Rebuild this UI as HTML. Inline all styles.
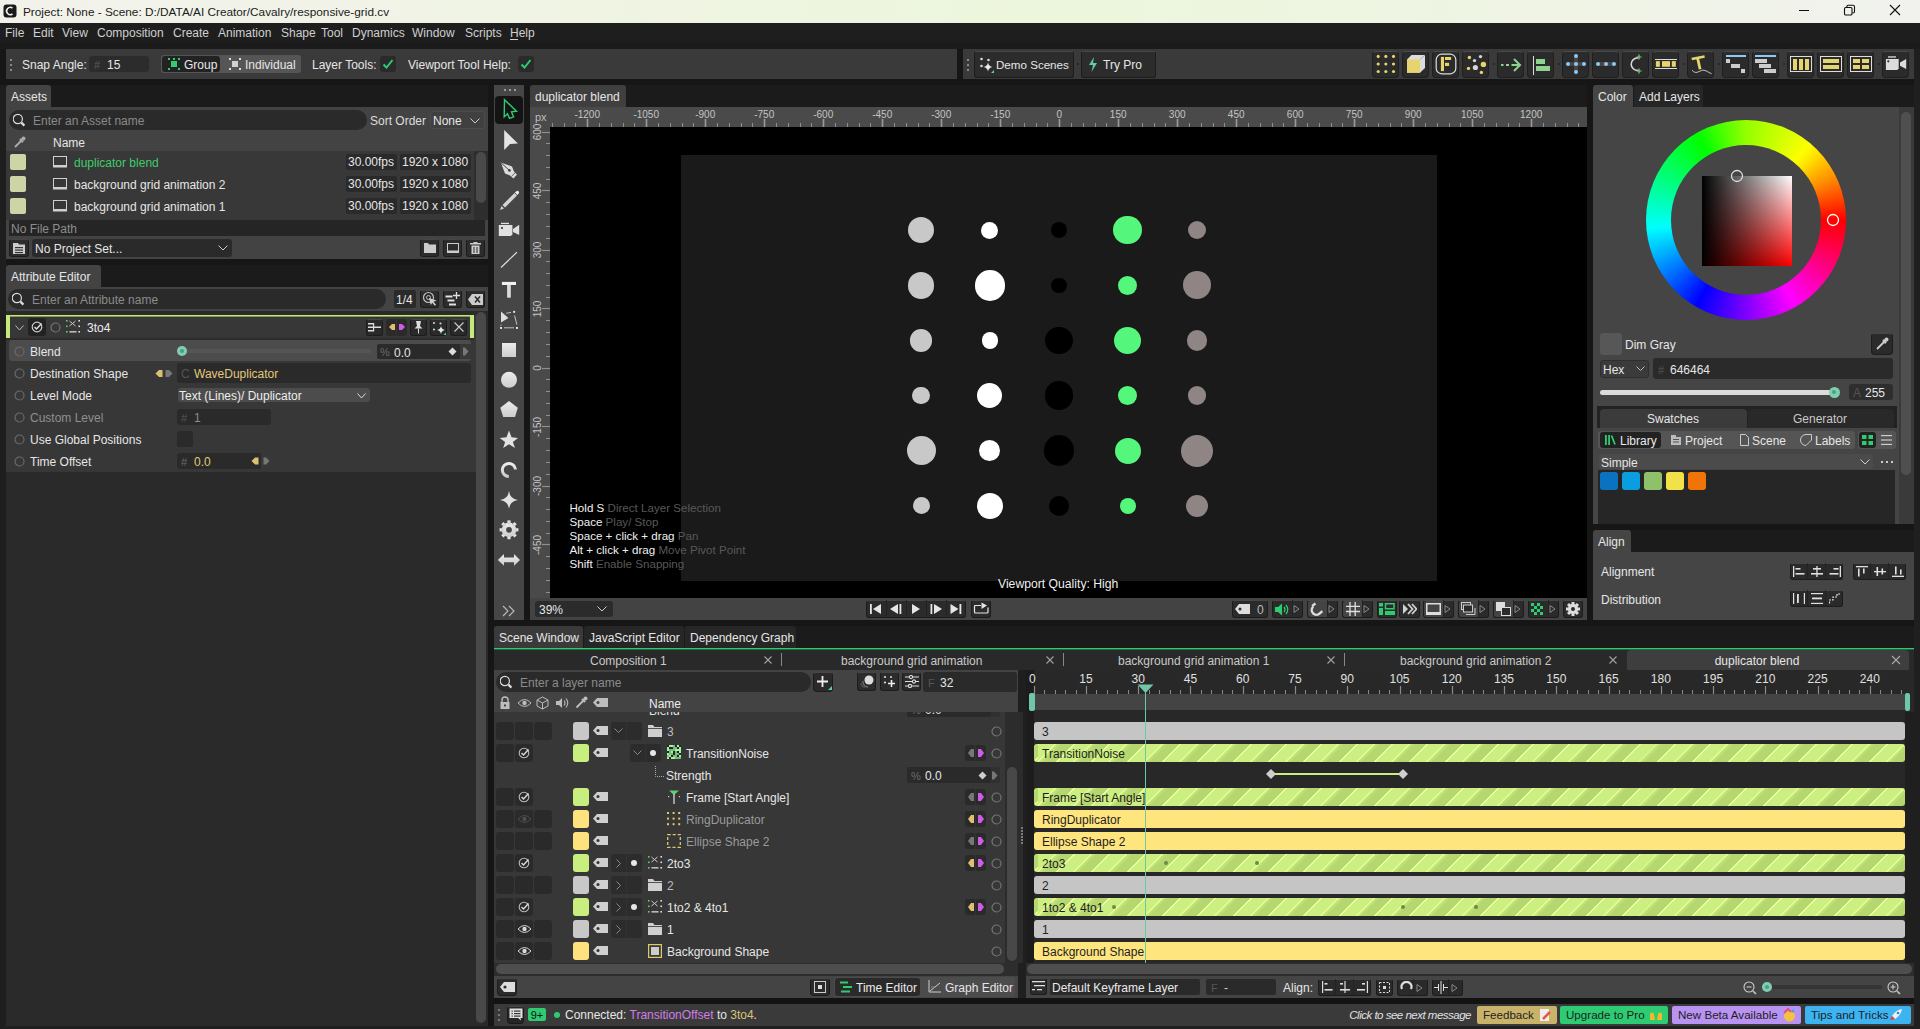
<!DOCTYPE html><html><head><meta charset="utf-8"><style>
html,body{margin:0;padding:0;width:1920px;height:1029px;overflow:hidden;background:#161616;font-family:"Liberation Sans",sans-serif;}
body>div,body>svg{position:absolute;box-sizing:border-box;}
.t{white-space:nowrap;}
</style></head><body>
<div style="left:0px;top:0px;width:1920px;height:23px;background:linear-gradient(to right,#f2f2eb 0%,#f1f3e8 15%,#eef5e0 40%,#ecf6dc 55%,#eff4e4 80%,#f1f2ee 100%);"></div>
<svg style="left:3px;top:4px;" width="14" height="14" viewBox="0 0 14 14"><rect x="0.5" y="0.5" width="13" height="13" rx="3" fill="#1a1a1a"/><path d="M9.5 4.2 A3.6 3.6 0 1 0 9.5 9.8" stroke="#eee" stroke-width="1.6" fill="none"/></svg>
<div class="t" style="left:23px;top:3.5px;height:16px;line-height:16px;font-size:11.8px;color:#1b1b1b;">Project: None - Scene: D:/DATA/AI Creator/Cavalry/responsive-grid.cv</div>
<svg style="left:1843px;top:4px;" width="13" height="13" viewBox="0 0 13 13"><rect x="1.5" y="3.5" width="7.5" height="7.5" rx="1.3" fill="none" stroke="#111" stroke-width="1.1"/><path d="M3.8 3.2 V2.6 Q3.8 1.2 5.2 1.2 H10 Q11.5 1.2 11.5 2.7 V7.6 Q11.5 9 10.1 9 H9.4" fill="none" stroke="#111" stroke-width="1.1"/></svg>
<svg style="left:1889px;top:4px;" width="12" height="12" viewBox="0 0 12 12"><path d="M1 1 L11 11 M11 1 L1 11" stroke="#111" stroke-width="1.1"/></svg>
<div style="left:1799px;top:10px;width:10px;height:1px;background:#111;"></div>
<div style="left:0px;top:23px;width:1920px;height:26px;background:#1e1e1e;"></div>
<div style="left:0px;top:42px;width:1920px;height:7px;background:#1b1b1b;"></div>
<div class="t" style="left:5px;top:24.5px;height:16px;line-height:16px;font-size:12px;color:#cfcfcf;">File</div>
<div class="t" style="left:33px;top:24.5px;height:16px;line-height:16px;font-size:12px;color:#cfcfcf;">Edit</div>
<div class="t" style="left:62px;top:24.5px;height:16px;line-height:16px;font-size:12px;color:#cfcfcf;">View</div>
<div class="t" style="left:97px;top:24.5px;height:16px;line-height:16px;font-size:12px;color:#cfcfcf;">Composition</div>
<div class="t" style="left:173px;top:24.5px;height:16px;line-height:16px;font-size:12px;color:#cfcfcf;">Create</div>
<div class="t" style="left:218px;top:24.5px;height:16px;line-height:16px;font-size:12px;color:#cfcfcf;">Animation</div>
<div class="t" style="left:281px;top:24.5px;height:16px;line-height:16px;font-size:12px;color:#cfcfcf;">Shape</div>
<div class="t" style="left:321px;top:24.5px;height:16px;line-height:16px;font-size:12px;color:#cfcfcf;">Tool</div>
<div class="t" style="left:352px;top:24.5px;height:16px;line-height:16px;font-size:12px;color:#cfcfcf;">Dynamics</div>
<div class="t" style="left:412px;top:24.5px;height:16px;line-height:16px;font-size:12px;color:#cfcfcf;">Window</div>
<div class="t" style="left:465px;top:24.5px;height:16px;line-height:16px;font-size:12px;color:#cfcfcf;">Scripts</div>
<div class="t" style="left:510px;top:24.5px;height:16px;line-height:16px;font-size:12px;color:#cfcfcf;">Help</div>
<div style="left:510px;top:39px;width:8px;height:1px;background:#cfcfcf;"></div>
<div style="left:0px;top:49px;width:1920px;height:36px;background:#161616;"></div>
<div style="left:6px;top:49px;width:951px;height:30px;background:#3a3a3a;"></div>
<div style="left:10px;top:59px;width:2px;height:2px;background:#8a8a8a;"></div>
<div style="left:10px;top:64px;width:2px;height:2px;background:#8a8a8a;"></div>
<div style="left:10px;top:69px;width:2px;height:2px;background:#8a8a8a;"></div>
<div class="t" style="left:22px;top:57.0px;height:16px;line-height:16px;font-size:12px;color:#e6e6e6;">Snap Angle:</div>
<div style="left:89px;top:56px;width:60px;height:16px;background:#2c2c2c;border-radius:3px;"></div>
<div class="t" style="left:94px;top:57.5px;height:15px;line-height:15px;font-size:11px;color:#5b5b5b;">#</div>
<div class="t" style="left:107px;top:57.0px;height:16px;line-height:16px;font-size:12px;color:#e6e6e6;">15</div>
<div style="left:161px;top:55px;width:140px;height:18px;background:#555555;border-radius:3px;"></div>
<div style="left:162px;top:56px;width:58px;height:16px;background:#222222;border-radius:3px;"></div>
<svg style="left:168px;top:58px;" width="12" height="12" viewBox="0 0 12 12"><rect x="3" y="3" width="6" height="6" fill="#2ecc71"/><rect x="0" y="0" width="2" height="2" fill="#2ecc71"/><rect x="10" y="0" width="2" height="2" fill="#2ecc71"/><rect x="0" y="10" width="2" height="2" fill="#2ecc71"/><rect x="10" y="10" width="2" height="2" fill="#2ecc71"/><rect x="5" y="0" width="2" height="2" fill="#2ecc71"/></svg>
<div class="t" style="left:184px;top:57.0px;height:16px;line-height:16px;font-size:12px;color:#eaeaea;">Group</div>
<svg style="left:229px;top:58px;" width="12" height="12" viewBox="0 0 12 12"><rect x="3" y="3" width="6" height="6" fill="#cfcfcf"/><rect x="0" y="0" width="2" height="2" fill="#ddd"/><rect x="10" y="0" width="2" height="2" fill="#ddd"/><rect x="0" y="10" width="2" height="2" fill="#ddd"/><rect x="10" y="10" width="2" height="2" fill="#ddd"/></svg>
<div class="t" style="left:245px;top:57.0px;height:16px;line-height:16px;font-size:12px;color:#e6e6e6;">Individual</div>
<div class="t" style="left:312px;top:57.0px;height:16px;line-height:16px;font-size:12px;color:#e6e6e6;">Layer Tools:</div>
<div style="left:380px;top:56px;width:16px;height:16px;background:#2a2a2a;border-radius:3px;"></div>
<svg style="left:382px;top:58px;" width="12" height="12" viewBox="0 0 12 12"><path d="M1.5 6.5 L4.5 9.5 L10.5 2" stroke="#2ecc71" stroke-width="2" fill="none"/></svg>
<div class="t" style="left:408px;top:57.0px;height:16px;line-height:16px;font-size:12px;color:#e6e6e6;">Viewport Tool Help:</div>
<div style="left:518px;top:56px;width:16px;height:16px;background:#2a2a2a;border-radius:3px;"></div>
<svg style="left:520px;top:58px;" width="12" height="12" viewBox="0 0 12 12"><path d="M1.5 6.5 L4.5 9.5 L10.5 2" stroke="#2ecc71" stroke-width="2" fill="none"/></svg>
<div style="left:963px;top:49px;width:951px;height:30px;background:#3a3a3a;"></div>
<div style="left:967px;top:59px;width:2px;height:2px;background:#8a8a8a;"></div>
<div style="left:967px;top:64px;width:2px;height:2px;background:#8a8a8a;"></div>
<div style="left:967px;top:69px;width:2px;height:2px;background:#8a8a8a;"></div>
<div style="left:974px;top:51px;width:100px;height:27px;background:#2c2c2c;border-radius:3px;border:1px solid #1c1c1c;border-top-color:#474747;"></div>
<svg style="left:978px;top:56px;" width="18" height="18" viewBox="0 0 18 18"><circle cx="3.5" cy="3" r="1.3" fill="#d8d8d8"/><circle cx="10.5" cy="4" r="1.3" fill="#d8d8d8"/><circle cx="3.5" cy="10" r="1.3" fill="#d8d8d8"/><path d="M10 6.5 Q10.6 10.4 14.5 11 Q10.6 11.6 10 15.5 Q9.4 11.6 5.5 11 Q9.4 10.4 10 6.5 Z" fill="#eeeeee"/><path d="M16 14 V17 H13 Z" fill="#5fcfa0"/></svg>
<div class="t" style="left:996px;top:57.0px;height:16px;line-height:16px;font-size:11.6px;color:#e6e6e6;">Demo Scenes</div>
<div style="left:1077px;top:63px;width:2px;height:2px;background:#222;"></div>
<div style="left:1081px;top:51px;width:75px;height:27px;background:#2c2c2c;border-radius:3px;border:1px solid #1c1c1c;border-top-color:#474747;"></div>
<svg style="left:1088px;top:57px;" width="10" height="15" viewBox="0 0 10 15"><path d="M6 0 L1 8 H5 L3.5 15 L9 6 H5 Z" fill="#5fcf9f"/></svg>
<div class="t" style="left:1103px;top:57.0px;height:16px;line-height:16px;font-size:12px;color:#e6e6e6;">Try Pro</div>
<div style="left:1372px;top:51px;width:27px;height:27px;background:#2b2b2b;border-radius:4px;border:1px solid #1f1f1f;border-top:1px solid #4a4a4a;"></div>
<div style="left:1402px;top:51px;width:27px;height:27px;background:#2b2b2b;border-radius:4px;border:1px solid #1f1f1f;border-top:1px solid #4a4a4a;"></div>
<div style="left:1432px;top:51px;width:27px;height:27px;background:#2b2b2b;border-radius:4px;border:1px solid #1f1f1f;border-top:1px solid #4a4a4a;"></div>
<div style="left:1462px;top:51px;width:27px;height:27px;background:#2b2b2b;border-radius:4px;border:1px solid #1f1f1f;border-top:1px solid #4a4a4a;"></div>
<div style="left:1497px;top:51px;width:27px;height:27px;background:#2b2b2b;border-radius:4px;border:1px solid #1f1f1f;border-top:1px solid #4a4a4a;"></div>
<div style="left:1527px;top:51px;width:27px;height:27px;background:#2b2b2b;border-radius:4px;border:1px solid #1f1f1f;border-top:1px solid #4a4a4a;"></div>
<div style="left:1562px;top:51px;width:27px;height:27px;background:#2b2b2b;border-radius:4px;border:1px solid #1f1f1f;border-top:1px solid #4a4a4a;"></div>
<div style="left:1592px;top:51px;width:27px;height:27px;background:#2b2b2b;border-radius:4px;border:1px solid #1f1f1f;border-top:1px solid #4a4a4a;"></div>
<div style="left:1622px;top:51px;width:27px;height:27px;background:#2b2b2b;border-radius:4px;border:1px solid #1f1f1f;border-top:1px solid #4a4a4a;"></div>
<div style="left:1652px;top:51px;width:27px;height:27px;background:#2b2b2b;border-radius:4px;border:1px solid #1f1f1f;border-top:1px solid #4a4a4a;"></div>
<div style="left:1687px;top:51px;width:27px;height:27px;background:#2b2b2b;border-radius:4px;border:1px solid #1f1f1f;border-top:1px solid #4a4a4a;"></div>
<div style="left:1722px;top:51px;width:27px;height:27px;background:#2b2b2b;border-radius:4px;border:1px solid #1f1f1f;border-top:1px solid #4a4a4a;"></div>
<div style="left:1752px;top:51px;width:27px;height:27px;background:#2b2b2b;border-radius:4px;border:1px solid #1f1f1f;border-top:1px solid #4a4a4a;"></div>
<div style="left:1787px;top:51px;width:27px;height:27px;background:#2b2b2b;border-radius:4px;border:1px solid #1f1f1f;border-top:1px solid #4a4a4a;"></div>
<div style="left:1817px;top:51px;width:27px;height:27px;background:#2b2b2b;border-radius:4px;border:1px solid #1f1f1f;border-top:1px solid #4a4a4a;"></div>
<div style="left:1847px;top:51px;width:27px;height:27px;background:#2b2b2b;border-radius:4px;border:1px solid #1f1f1f;border-top:1px solid #4a4a4a;"></div>
<div style="left:1882px;top:51px;width:27px;height:27px;background:#2b2b2b;border-radius:4px;border:1px solid #1f1f1f;border-top:1px solid #4a4a4a;"></div>
<div style="left:1493px;top:63px;width:2px;height:2px;background:#2a2a2a;"></div>
<div style="left:1558px;top:63px;width:2px;height:2px;background:#2a2a2a;"></div>
<div style="left:1683px;top:63px;width:2px;height:2px;background:#2a2a2a;"></div>
<div style="left:1718px;top:63px;width:2px;height:2px;background:#2a2a2a;"></div>
<div style="left:1783px;top:63px;width:2px;height:2px;background:#2a2a2a;"></div>
<div style="left:1878px;top:63px;width:2px;height:2px;background:#2a2a2a;"></div>
<svg style="left:1376px;top:54px;" width="21" height="21" viewBox="0 0 21 21"><circle cx="2.2" cy="2.4" r="1.55" fill="#e6d46e"/><circle cx="2.2" cy="9.95" r="1.55" fill="#e6d46e"/><circle cx="2.2" cy="17.5" r="1.55" fill="#e6d46e"/><circle cx="9.850000000000001" cy="2.4" r="1.55" fill="#e6d46e"/><circle cx="9.850000000000001" cy="9.95" r="1.55" fill="#e6d46e"/><circle cx="9.850000000000001" cy="17.5" r="1.55" fill="#e6d46e"/><circle cx="17.5" cy="2.4" r="1.55" fill="#e6d46e"/><circle cx="17.5" cy="9.95" r="1.55" fill="#e6d46e"/><circle cx="17.5" cy="17.5" r="1.55" fill="#e6d46e"/></svg>
<svg style="left:1406px;top:54px;" width="21" height="20" viewBox="0 0 21 20"><path d="M1 5.5 L5.5 1 H19 V14 L14 18.7 H1 Z" fill="#dcdcdc"/><rect x="1" y="5.5" width="13" height="13.2" fill="#e6d46e"/><path d="M14 5.5 L19 1" stroke="#9a9a9a" stroke-width="0.8"/></svg>
<svg style="left:1435px;top:53px;" width="22" height="22" viewBox="0 0 22 22"><rect x="1.2" y="1.2" width="19.6" height="19.6" rx="5.5" fill="none" stroke="#dcdcdc" stroke-width="1.2"/><rect x="5.9" y="3.9" width="3.1" height="14.2" fill="#e6d46e"/><rect x="10" y="4" width="6.1" height="3" fill="#e6d46e"/><rect x="10" y="9.8" width="4.1" height="3.2" fill="#e6d46e"/></svg>
<svg style="left:1463px;top:53px;" width="24" height="22" viewBox="0 0 24 22"><circle cx="6.4" cy="4.5" r="1.7" fill="#e6d46e"/><circle cx="17.5" cy="3.6" r="1.7" fill="#d6d6d6"/><circle cx="11.5" cy="7.6" r="1.7" fill="#d6d6d6"/><circle cx="20.4" cy="11.4" r="2.7" fill="#e6d46e"/><circle cx="5.5" cy="15.4" r="1.7" fill="#e6d46e"/><circle cx="12.4" cy="14.5" r="2.6" fill="#d6d6d6"/><circle cx="18.4" cy="19.4" r="1.7" fill="#e6d46e"/></svg>
<svg style="left:1500px;top:57px;" width="22" height="16" viewBox="0 0 22 16"><path d="M1 8 H3.5 M6 8 H9 M11.5 8 H19" stroke="#8fd28f" stroke-width="2"/><path d="M14 2 L20 8 L14 14" stroke="#8fd28f" stroke-width="2" fill="none"/></svg>
<svg style="left:1531px;top:56px;" width="20" height="19" viewBox="0 0 20 19"><rect x="2" y="0" width="1" height="19" fill="#ddd"/><rect x="5" y="3" width="9" height="5" fill="#8fd28f"/><rect x="5" y="10" width="14" height="5" fill="#8fd28f"/></svg>
<svg style="left:1562px;top:50px;" width="28" height="28" viewBox="0 0 28 28"><rect x="12" y="6" width="4" height="16" fill="#464646"/><rect x="6" y="12" width="16" height="4" fill="#464646"/><circle cx="14" cy="6" r="2" fill="#8ec8f4"/><circle cx="14" cy="14" r="2" fill="#8ec8f4"/><circle cx="14" cy="22" r="2" fill="#8ec8f4"/><circle cx="6" cy="14" r="2" fill="#8ec8f4"/><circle cx="22" cy="14" r="2" fill="#8ec8f4"/></svg>
<svg style="left:1592px;top:50px;" width="28" height="28" viewBox="0 0 28 28"><rect x="6" y="12" width="16" height="4" fill="#464646"/><circle cx="6" cy="14" r="2" fill="#8ec8f4"/><circle cx="14" cy="14" r="2" fill="#8ec8f4"/><circle cx="22" cy="14" r="2" fill="#8ec8f4"/></svg>
<svg style="left:1622px;top:50px;" width="28" height="28" viewBox="0 0 28 28"><path d="M16.2 7.7 A7 6.45 0 0 0 16.2 20.6" stroke="#dcdcdc" stroke-width="1.5" fill="none"/><path d="M17 4.5 V9.5 M14.5 7 H19.5 M17 18.5 V23.5 M14.5 21 H19.5" stroke="#7fcf8f" stroke-width="1.2"/></svg>
<svg style="left:1652px;top:50px;" width="28" height="28" viewBox="0 0 28 28"><rect x="3" y="9" width="22" height="1" fill="#ddd"/><rect x="3" y="18" width="22" height="1" fill="#ddd"/><rect x="3.9" y="11.1" width="4" height="5.7" fill="#e6d46e"/><rect x="10" y="11.1" width="8" height="5.7" fill="#e6d46e"/><rect x="19.8" y="11.1" width="4" height="5.7" fill="#e6d46e"/></svg>
<svg style="left:1687px;top:50px;" width="28" height="28" viewBox="0 0 28 28"><path d="M4.7 9 L17.6 6.4" stroke="#e6d46e" stroke-width="2.6"/><path d="M10.5 7.7 L13.1 19.2" stroke="#e6d46e" stroke-width="2.8"/><path d="M5 20.1 Q8 24 12 21.5 T19 20.8 T24.6 23.7" stroke="#cfcfcf" stroke-width="0.9" fill="none"/></svg>
<svg style="left:1726px;top:55px;" width="20" height="20" viewBox="0 0 20 20"><rect x="0" y="0" width="20" height="2" fill="#8ec8f4"/><rect x="0" y="4" width="4" height="4" fill="#ccc"/><rect x="5" y="9" width="9" height="4" fill="#ccc"/><rect x="15" y="14" width="4" height="4" fill="#ccc"/></svg>
<svg style="left:1755px;top:55px;" width="21" height="20" viewBox="0 0 21 20"><rect x="0" y="0" width="21" height="2" fill="#8ec8f4"/><rect x="0" y="4" width="12" height="4" fill="#ccc"/><rect x="4" y="9" width="12" height="4" fill="#ccc"/><rect x="9" y="14" width="12" height="4" fill="#ccc"/></svg>
<svg style="left:1790px;top:56px;" width="22" height="17" viewBox="0 0 22 17"><rect x="0.5" y="0.5" width="21" height="15" fill="none" stroke="#ddd"/><rect x="3" y="3" width="4" height="11" fill="#e6d46e"/><rect x="9" y="3" width="4" height="11" fill="#e6d46e"/><rect x="15" y="3" width="4" height="11" fill="#e6d46e"/></svg>
<svg style="left:1820px;top:56px;" width="22" height="17" viewBox="0 0 22 17"><rect x="0.5" y="0.5" width="21" height="15" fill="none" stroke="#ddd"/><rect x="3" y="3" width="16" height="4" fill="#e6d46e"/><rect x="3" y="9" width="16" height="4" fill="#e6d46e"/></svg>
<svg style="left:1850px;top:56px;" width="22" height="17" viewBox="0 0 22 17"><rect x="0.5" y="0.5" width="21" height="15" fill="none" stroke="#ddd"/><rect x="3" y="3" width="7" height="4" fill="#e6d46e"/><rect x="12" y="3" width="7" height="4" fill="#e6d46e"/><rect x="3" y="9" width="7" height="4" fill="#e6d46e"/><rect x="12" y="9" width="7" height="4" fill="#e6d46e"/></svg>
<svg style="left:1882px;top:50px;" width="28" height="28" viewBox="0 0 28 28"><rect x="6" y="6.3" width="8" height="1.3" fill="#dcdcdc"/><path d="M3.9 8.9 H16.7 V18.4 L15.2 19.9 H3.9 Z" fill="#dcdcdc"/><path d="M18 12.5 L24.2 8.9 V19 L18 15.8 Z" fill="#dcdcdc"/><circle cx="6.3" cy="11.3" r="1.1" fill="#2b2b2b"/></svg>
<div style="left:6px;top:85px;width:482px;height:941px;background:#2a2a2a;"></div>
<div style="left:6px;top:85px;width:482px;height:22px;background:#1b1b1b;"></div>
<div style="left:6px;top:85px;width:45px;height:22px;background:#434343;border-radius:3px 3px 0 0;"></div>
<div class="t" style="left:11px;top:89.0px;height:16px;line-height:16px;font-size:12px;color:#e6e6e6;">Assets</div>
<div style="left:6px;top:107px;width:482px;height:152px;background:#434343;"></div>
<div style="left:9px;top:110px;width:358px;height:20px;background:#2a2a2a;border-radius:10px;"></div>
<svg style="left:13px;top:113px;" width="14" height="14" viewBox="0 0 14 14"><circle cx="4.8" cy="6" r="4.6" stroke="#ddd" stroke-width="1.2" fill="none"/><path d="M8.4 9.6 L11.4 12.6" stroke="#ddd" stroke-width="2.2"/></svg>
<div class="t" style="left:33px;top:113.0px;height:16px;line-height:16px;font-size:12px;color:#8b8b8b;">Enter an Asset name</div>
<div class="t" style="left:370px;top:113.0px;height:16px;line-height:16px;font-size:12px;color:#dcdcdc;">Sort Order</div>
<div style="left:430px;top:111px;width:55px;height:18px;background:#404040;border-radius:3px;border:1px solid #4c4c4c;"></div>
<div class="t" style="left:433px;top:113.0px;height:16px;line-height:16px;font-size:12px;color:#e6e6e6;">None</div>
<svg style="left:470px;top:118px;" width="10" height="6" viewBox="0 0 10 6"><path d="M0.5 0.5 L5.0 5 L9.5 0.5" stroke="#ccc" stroke-width="1" fill="none"/></svg>
<div style="left:6px;top:133px;width:482px;height:18px;background:#434343;"></div>
<svg style="left:13px;top:136px;" width="13" height="13" viewBox="0 0 13 13"><path d="M2 11 L8 5" stroke="#aaa" stroke-width="2"/><path d="M7 3 L10 6" stroke="#aaa" stroke-width="2.5"/><circle cx="10.5" cy="2.5" r="2" fill="#aaa"/></svg>
<div class="t" style="left:53px;top:135.0px;height:16px;line-height:16px;font-size:12px;color:#e6e6e6;">Name</div>
<div style="left:6px;top:151px;width:468px;height:69px;background:#383838;"></div>
<div style="left:10px;top:154px;width:16px;height:16px;background:#cdd4a6;border-radius:2px;"></div>
<svg style="left:53px;top:155px;" width="14" height="13" viewBox="0 0 14 13"><rect x="0.5" y="1.5" width="13" height="9" fill="none" stroke="#cfcfcf" stroke-width="1"/><rect x="0" y="10" width="14" height="2.5" fill="#cfcfcf"/></svg>
<div class="t" style="left:74px;top:155.0px;height:16px;line-height:16px;font-size:12px;color:#3fcb6a;">duplicator blend</div>
<div style="left:346px;top:154px;width:51px;height:16px;background:#2a2a2a;border-radius:2px;"></div>
<div class="t" style="left:348px;top:154.0px;height:16px;line-height:16px;font-size:12px;color:#e6e6e6;">30.00fps</div>
<div style="left:400px;top:154px;width:71px;height:16px;background:#2a2a2a;border-radius:2px;"></div>
<div class="t" style="left:402px;top:154.0px;height:16px;line-height:16px;font-size:12px;color:#e6e6e6;">1920 x 1080</div>
<div style="left:10px;top:176px;width:16px;height:16px;background:#cdd4a6;border-radius:2px;"></div>
<svg style="left:53px;top:177px;" width="14" height="13" viewBox="0 0 14 13"><rect x="0.5" y="1.5" width="13" height="9" fill="none" stroke="#cfcfcf" stroke-width="1"/><rect x="0" y="10" width="14" height="2.5" fill="#cfcfcf"/></svg>
<div class="t" style="left:74px;top:177.0px;height:16px;line-height:16px;font-size:12px;color:#e6e6e6;">background grid animation 2</div>
<div style="left:346px;top:176px;width:51px;height:16px;background:#2a2a2a;border-radius:2px;"></div>
<div class="t" style="left:348px;top:176.0px;height:16px;line-height:16px;font-size:12px;color:#e6e6e6;">30.00fps</div>
<div style="left:400px;top:176px;width:71px;height:16px;background:#2a2a2a;border-radius:2px;"></div>
<div class="t" style="left:402px;top:176.0px;height:16px;line-height:16px;font-size:12px;color:#e6e6e6;">1920 x 1080</div>
<div style="left:10px;top:198px;width:16px;height:16px;background:#cdd4a6;border-radius:2px;"></div>
<svg style="left:53px;top:199px;" width="14" height="13" viewBox="0 0 14 13"><rect x="0.5" y="1.5" width="13" height="9" fill="none" stroke="#cfcfcf" stroke-width="1"/><rect x="0" y="10" width="14" height="2.5" fill="#cfcfcf"/></svg>
<div class="t" style="left:74px;top:199.0px;height:16px;line-height:16px;font-size:12px;color:#e6e6e6;">background grid animation 1</div>
<div style="left:346px;top:198px;width:51px;height:16px;background:#2a2a2a;border-radius:2px;"></div>
<div class="t" style="left:348px;top:198.0px;height:16px;line-height:16px;font-size:12px;color:#e6e6e6;">30.00fps</div>
<div style="left:400px;top:198px;width:71px;height:16px;background:#2a2a2a;border-radius:2px;"></div>
<div class="t" style="left:402px;top:198.0px;height:16px;line-height:16px;font-size:12px;color:#e6e6e6;">1920 x 1080</div>
<div style="left:474px;top:151px;width:14px;height:69px;background:#2e2e2e;"></div>
<div style="left:476px;top:152px;width:10px;height:51px;background:#4a4a4a;border-radius:5px;"></div>
<div style="left:9px;top:220px;width:476px;height:16px;background:#252525;"></div>
<div class="t" style="left:11px;top:221.0px;height:16px;line-height:16px;font-size:12px;color:#8d8d8d;">No File Path</div>
<div style="left:6px;top:236px;width:482px;height:23px;background:#434343;"></div>
<div style="left:9px;top:239px;width:20px;height:18px;background:#2c2c2c;border-radius:3px;border:1px solid #1c1c1c;border-top-color:#474747;"></div>
<svg style="left:12px;top:241px;" width="14" height="14" viewBox="0 0 14 14"><path d="M1 2 H6 L7 3.5 H13 V13 H1 Z" fill="#ccc"/><rect x="3" y="6" width="8" height="1.2" fill="#333"/><rect x="3" y="8.5" width="8" height="1.2" fill="#333"/><rect x="3" y="11" width="8" height="1.2" fill="#333"/></svg>
<div style="left:32px;top:239px;width:200px;height:18px;background:#2a2a2a;border-radius:3px;"></div>
<div class="t" style="left:35px;top:241.0px;height:16px;line-height:16px;font-size:12px;color:#e6e6e6;">No Project Set...</div>
<svg style="left:218px;top:245px;" width="10" height="6" viewBox="0 0 10 6"><path d="M0.5 0.5 L5.0 5 L9.5 0.5" stroke="#ccc" stroke-width="1" fill="none"/></svg>
<div style="left:420px;top:239px;width:19px;height:18px;background:#2c2c2c;border-radius:3px;border:1px solid #1c1c1c;border-top-color:#474747;"></div>
<div style="left:443px;top:239px;width:19px;height:18px;background:#2c2c2c;border-radius:3px;border:1px solid #1c1c1c;border-top-color:#474747;"></div>
<div style="left:466px;top:239px;width:19px;height:18px;background:#2c2c2c;border-radius:3px;border:1px solid #1c1c1c;border-top-color:#474747;"></div>
<svg style="left:424px;top:243px;" width="12" height="10" viewBox="0 0 12 10"><path d="M0 0 H4 L5 1.5 H12 V10 H0 Z" fill="#ccc"/></svg>
<svg style="left:447px;top:243px;" width="12" height="10" viewBox="0 0 12 10"><rect x="0.5" y="0.5" width="11" height="7.5" fill="none" stroke="#ccc"/><rect x="0" y="8" width="12" height="2" fill="#ccc"/></svg>
<svg style="left:470px;top:242px;" width="11" height="12" viewBox="0 0 11 12"><rect x="0" y="1" width="11" height="1.5" fill="#ccc"/><rect x="3.5" y="0" width="4" height="1.5" fill="#ccc"/><path d="M1.5 3.5 H9.5 V12 H1.5 Z" fill="#ccc"/><rect x="3.5" y="5" width="1" height="6" fill="#2c2c2c"/><rect x="6.5" y="5" width="1" height="6" fill="#2c2c2c"/></svg>
<div style="left:6px;top:259px;width:482px;height:6px;background:#161616;"></div>
<div style="left:6px;top:265px;width:482px;height:22px;background:#1b1b1b;"></div>
<div style="left:6px;top:265px;width:95px;height:22px;background:#434343;border-radius:3px 3px 0 0;"></div>
<div class="t" style="left:11px;top:269.0px;height:16px;line-height:16px;font-size:12px;color:#e6e6e6;">Attribute Editor</div>
<div style="left:6px;top:287px;width:482px;height:24px;background:#434343;"></div>
<div style="left:8px;top:289px;width:378px;height:20px;background:#2a2a2a;border-radius:10px;"></div>
<svg style="left:12px;top:292px;" width="14" height="14" viewBox="0 0 14 14"><circle cx="4.8" cy="6" r="4.6" stroke="#ddd" stroke-width="1.2" fill="none"/><path d="M8.4 9.6 L11.4 12.6" stroke="#ddd" stroke-width="2.2"/></svg>
<div class="t" style="left:32px;top:292.0px;height:16px;line-height:16px;font-size:12px;color:#8b8b8b;">Enter an Attribute name</div>
<div style="left:394px;top:290px;width:22px;height:18px;background:#2a2a2a;border-radius:2px;"></div>
<div class="t" style="left:396px;top:292.0px;height:16px;line-height:16px;font-size:12px;color:#e6e6e6;">1/4</div>
<div style="left:420px;top:290px;width:19px;height:18px;background:#2c2c2c;border-radius:3px;border:1px solid #1c1c1c;border-top-color:#474747;"></div>
<div style="left:443px;top:290px;width:19px;height:18px;background:#2c2c2c;border-radius:3px;border:1px solid #1c1c1c;border-top-color:#474747;"></div>
<div style="left:466px;top:290px;width:19px;height:18px;background:#2c2c2c;border-radius:3px;border:1px solid #1c1c1c;border-top-color:#474747;"></div>
<svg style="left:422px;top:291px;" width="16" height="16" viewBox="0 0 16 16"><circle cx="6.5" cy="6.5" r="5" stroke="#bdbdbd" stroke-width="1.2" fill="none"/><circle cx="6.5" cy="6.5" r="2" stroke="#bdbdbd" stroke-width="1" fill="none"/><path d="M7 7 L14.5 9.5 L11.5 10.8 L14 13.8 L12.8 14.8 L10.3 11.8 L8.8 14 Z" fill="#cfcfcf"/></svg>
<svg style="left:445px;top:291px;" width="16" height="16" viewBox="0 0 16 16"><rect x="0.5" y="4.5" width="7" height="2" fill="#e0e0e0"/><rect x="2.5" y="8.5" width="7" height="2" fill="#e0e0e0"/><rect x="4" y="12.5" width="7" height="2" fill="#e0e0e0"/><path d="M11.5 1 V8 M8 4.5 H15" stroke="#e0e0e0" stroke-width="1.3"/></svg>
<svg style="left:468px;top:294px;" width="15" height="11" viewBox="0 0 15 11"><path d="M4 0 H15 V11 H4 L0 5.5 Z" fill="#ccc"/><path d="M7 2.5 L12 8.5 M12 2.5 L7 8.5" stroke="#2c2c2c" stroke-width="1.5"/></svg>
<div style="left:6px;top:315px;width:470px;height:157px;background:#373737;"></div>
<div style="left:6px;top:315px;width:468px;height:23px;background:#373737;"></div>
<div style="left:6px;top:338px;width:468px;height:2px;background:#2c2c2c;"></div>
<div style="left:6px;top:315px;width:468px;height:1px;background:#c3ea7a;"></div>
<div style="left:6px;top:316px;width:468px;height:1px;background:#7d9a52;"></div>
<div style="left:6px;top:315px;width:4px;height:23px;background:#c3ea7a;"></div>
<div style="left:470px;top:315px;width:4px;height:23px;background:#c3ea7a;"></div>
<svg style="left:15px;top:325px;" width="9" height="6" viewBox="0 0 9 6"><path d="M0.5 0.5 L4.5 5 L8.5 0.5" stroke="#bbb" stroke-width="1" fill="none"/></svg>
<div style="left:28px;top:318px;width:18px;height:18px;background:#222222;border-radius:3px;"></div>
<svg style="left:31px;top:321px;" width="12" height="12" viewBox="0 0 12 12"><circle cx="6" cy="6" r="4.8" stroke="#ccc" stroke-width="1.2" fill="none"/><path d="M3.5 6 L5.5 8 L10.5 2.5" stroke="#ddd" stroke-width="1.5" fill="none"/></svg>
<svg style="left:49.5px;top:321.5px;" width="11.0" height="11.0" viewBox="0 0 11.0 11.0"><circle cx="5.5" cy="5.5" r="4.5" stroke="#747474" stroke-width="1.2" fill="none"/></svg>
<svg style="left:66px;top:320px;" width="14" height="13" viewBox="0 0 14 13"><rect x="0" y="0" width="1.6" height="1.6" fill="#5fcf6f"/><rect x="0" y="5.5" width="1.6" height="1.6" fill="#5fcf6f"/><rect x="0" y="11" width="1.6" height="1.6" fill="#5fcf6f"/><rect x="12.4" y="0" width="1.6" height="1.6" fill="#ddd"/><rect x="12.4" y="5.5" width="1.6" height="1.6" fill="#ddd"/><rect x="12.4" y="11" width="1.6" height="1.6" fill="#ddd"/><path d="M3.5 1 L9.5 6 M9.5 1 L3.5 6" stroke="#ccc" stroke-width="1"/><rect x="3.5" y="11" width="7" height="1.6" fill="#bbb"/></svg>
<div class="t" style="left:87px;top:320.0px;height:16px;line-height:16px;font-size:12px;color:#ececec;">3to4</div>
<div style="left:366px;top:319px;width:17px;height:17px;background:#2a2a2a;border-radius:3px;border:1px solid #1c1c1c;border-top-color:#474747;"></div>
<svg style="left:368px;top:323px;" width="13" height="9" viewBox="0 0 13 9"><rect x="0" y="0" width="5" height="1.5" fill="#ddd"/><rect x="0" y="3.5" width="5" height="1.5" fill="#ddd"/><rect x="0" y="7" width="5" height="1.5" fill="#ddd"/><rect x="5" y="3.5" width="8" height="1.5" fill="#ddd"/><rect x="5" y="0" width="1.2" height="8.5" fill="#ddd"/></svg>
<div style="left:386px;top:319px;width:21px;height:17px;background:#2a2a2a;border-radius:3px;"></div>
<div style="left:396px;top:319px;width:1px;height:17px;background:#333;"></div>
<svg style="left:388px;top:322px;" width="8" height="10" viewBox="0 0 8 10"><path d="M7 2 H4 L1 5 L4 8 H7 Z" fill="#e0c070"/></svg>
<svg style="left:398px;top:322px;" width="8" height="10" viewBox="0 0 8 10"><path d="M1 2 H4 L7 5 L4 8 H1 Z" fill="#cf5ce6"/></svg>
<div style="left:410px;top:319px;width:17px;height:17px;background:#2a2a2a;border-radius:3px;border:1px solid #1c1c1c;border-top-color:#474747;"></div>
<div style="left:430px;top:319px;width:17px;height:17px;background:#2a2a2a;border-radius:3px;border:1px solid #1c1c1c;border-top-color:#474747;"></div>
<div style="left:450px;top:319px;width:17px;height:17px;background:#2a2a2a;border-radius:3px;border:1px solid #1c1c1c;border-top-color:#474747;"></div>
<svg style="left:414px;top:321px;" width="9" height="13" viewBox="0 0 9 13"><path d="M2 0 H7 L6 5 L8.5 7.5 H0.5 L3 5 Z" fill="#ddd"/><rect x="4" y="7.5" width="1" height="5" fill="#ddd"/></svg>
<svg style="left:431px;top:320px;" width="15" height="15" viewBox="0 0 15 15"><circle cx="3" cy="3" r="1.1" fill="#cfcfcf"/><circle cx="9.5" cy="3.5" r="1.1" fill="#cfcfcf"/><circle cx="3" cy="9.5" r="1.1" fill="#cfcfcf"/><path d="M10 6 Q10.6 9.4 14 10 Q10.6 10.6 10 14 Q9.4 10.6 6 10 Q9.4 9.4 10 6 Z" fill="#e6e6e6"/><path d="M15 12.5 V15 H12.5 Z" fill="#5fcfa0"/></svg>
<svg style="left:454px;top:322px;" width="10" height="10" viewBox="0 0 10 10"><path d="M0.5 0.5 L9.5 9.5 M9.5 0.5 L0.5 9.5" stroke="#ccc" stroke-width="1.1"/></svg>
<div style="left:9px;top:340px;width:462px;height:21px;background:#4c4c4c;border-radius:3px;"></div>
<svg style="left:13.5px;top:345.5px;" width="11.0" height="11.0" viewBox="0 0 11.0 11.0"><circle cx="5.5" cy="5.5" r="4.5" stroke="#6a6a6a" stroke-width="1.2" fill="none"/></svg>
<div class="t" style="left:30px;top:344.0px;height:16px;line-height:16px;font-size:12px;color:#e6e6e6;">Blend</div>
<svg style="left:13.5px;top:367.5px;" width="11.0" height="11.0" viewBox="0 0 11.0 11.0"><circle cx="5.5" cy="5.5" r="4.5" stroke="#6a6a6a" stroke-width="1.2" fill="none"/></svg>
<div class="t" style="left:30px;top:366.0px;height:16px;line-height:16px;font-size:12px;color:#e6e6e6;">Destination Shape</div>
<svg style="left:13.5px;top:389.5px;" width="11.0" height="11.0" viewBox="0 0 11.0 11.0"><circle cx="5.5" cy="5.5" r="4.5" stroke="#6a6a6a" stroke-width="1.2" fill="none"/></svg>
<div class="t" style="left:30px;top:388.0px;height:16px;line-height:16px;font-size:12px;color:#e6e6e6;">Level Mode</div>
<svg style="left:13.5px;top:411.5px;" width="11.0" height="11.0" viewBox="0 0 11.0 11.0"><circle cx="5.5" cy="5.5" r="4.5" stroke="#6a6a6a" stroke-width="1.2" fill="none"/></svg>
<div class="t" style="left:30px;top:410.0px;height:16px;line-height:16px;font-size:12px;color:#8f8f8f;">Custom Level</div>
<svg style="left:13.5px;top:433.5px;" width="11.0" height="11.0" viewBox="0 0 11.0 11.0"><circle cx="5.5" cy="5.5" r="4.5" stroke="#6a6a6a" stroke-width="1.2" fill="none"/></svg>
<div class="t" style="left:30px;top:432.0px;height:16px;line-height:16px;font-size:12px;color:#e6e6e6;">Use Global Positions</div>
<svg style="left:13.5px;top:455.5px;" width="11.0" height="11.0" viewBox="0 0 11.0 11.0"><circle cx="5.5" cy="5.5" r="4.5" stroke="#6a6a6a" stroke-width="1.2" fill="none"/></svg>
<div class="t" style="left:30px;top:454.0px;height:16px;line-height:16px;font-size:12px;color:#e6e6e6;">Time Offset</div>
<div style="left:177px;top:349px;width:194px;height:4px;background:#555555;border-radius:2px;"></div>
<div style="left:177px;top:346px;width:10px;height:10px;border-radius:50%;background:#7ecfb0;"></div>
<div style="left:180.2px;top:349.2px;width:3.6px;height:3.6px;border-radius:50%;background:#4f9f84;"></div>
<div style="left:377px;top:344px;width:94px;height:15px;background:#2a2a2a;border-radius:2px;"></div>
<div style="left:460px;top:344px;width:11px;height:15px;background:#383838;border-radius:0 2px 2px 0;"></div>
<div class="t" style="left:380px;top:345.0px;height:15px;line-height:15px;font-size:11px;color:#6b6b6b;">%</div>
<div class="t" style="left:394px;top:344.5px;height:16px;line-height:16px;font-size:12px;color:#e6e6e6;">0.0</div>
<svg style="left:448px;top:347px;" width="9" height="9" viewBox="0 0 9 9"><path d="M4.5 0.5 L8.5 4.5 L4.5 8.5 L0.5 4.5 Z" fill="#ddd"/></svg>
<svg style="left:463px;top:347px;" width="6" height="9" viewBox="0 0 6 9"><path d="M0 0.5 H2 L5.5 4.5 L2 8.5 H0 Z" fill="#777"/></svg>
<svg style="left:155px;top:369px;" width="8" height="9" viewBox="0 0 8 9"><path d="M7.5 1 H4 L0.5 4.5 L4 8 H7.5 Z" fill="#dcc070"/></svg>
<svg style="left:165px;top:369px;" width="8" height="9" viewBox="0 0 8 9"><path d="M0.5 1 H4 L7.5 4.5 L4 8 H0.5 Z" fill="#777"/></svg>
<div style="left:177px;top:363px;width:294px;height:20px;background:#2a2a2a;border-radius:3px;"></div>
<div class="t" style="left:181px;top:366.0px;height:16px;line-height:16px;font-size:12px;color:#555;">C</div>
<div class="t" style="left:194px;top:366.0px;height:16px;line-height:16px;font-size:12px;color:#e3c87a;">WaveDuplicator</div>
<div style="left:178px;top:388px;width:192px;height:14px;background:#4c4c4c;border-radius:3px;"></div>
<div class="t" style="left:179px;top:388.0px;height:16px;line-height:16px;font-size:12px;color:#ececec;">Text (Lines)/ Duplicator</div>
<svg style="left:357px;top:393px;" width="9" height="6" viewBox="0 0 9 6"><path d="M0.5 0.5 L4.5 5 L8.5 0.5" stroke="#ddd" stroke-width="1" fill="none"/></svg>
<div style="left:177px;top:409px;width:94px;height:16px;background:#2a2a2a;border-radius:3px;"></div>
<div class="t" style="left:181px;top:410.5px;height:15px;line-height:15px;font-size:11px;color:#555;">#</div>
<div class="t" style="left:194px;top:410.0px;height:16px;line-height:16px;font-size:12px;color:#8c8c8c;">1</div>
<div style="left:177px;top:431px;width:16px;height:16px;background:#2a2a2a;border-radius:2px;"></div>
<div style="left:177px;top:453px;width:94px;height:16px;background:#2a2a2a;border-radius:3px;"></div>
<div style="left:261px;top:453px;width:10px;height:16px;background:#383838;"></div>
<div class="t" style="left:181px;top:454.5px;height:15px;line-height:15px;font-size:11px;color:#6b6b6b;">#</div>
<div class="t" style="left:194px;top:454.0px;height:16px;line-height:16px;font-size:12px;color:#e3c87a;">0.0</div>
<svg style="left:251px;top:457px;" width="8" height="9" viewBox="0 0 8 9"><path d="M7.5 0.5 H4 L0.5 4 L4 7.5 H7.5 Z" fill="#dcc070"/></svg>
<svg style="left:263px;top:457px;" width="7" height="9" viewBox="0 0 7 9"><path d="M0.5 0.5 H3 L6.5 4 L3 7.5 H0.5 Z" fill="#777"/></svg>
<div style="left:476px;top:312px;width:10px;height:711px;background:#494949;border-radius:5px;"></div>
<div style="left:494px;top:85px;width:30px;height:535px;background:#464646;"></div>
<div style="left:504px;top:89px;width:2px;height:2px;background:#9a9a9a;"></div>
<div style="left:509px;top:89px;width:2px;height:2px;background:#9a9a9a;"></div>
<div style="left:514px;top:89px;width:2px;height:2px;background:#9a9a9a;"></div>
<div style="left:495px;top:96px;width:28px;height:28px;background:#141414;border-radius:4px;"></div>
<svg style="left:494px;top:95px;" width="30" height="30" viewBox="0 0 30 30"><path d="M10.5 4.7 L22.5 16.3 L17.5 16.9 L19.6 21.9 L15.5 23.4 L13.5 18.8 L10.2 21.9 Z" fill="none" stroke="#2ecc71" stroke-width="1.4" stroke-linejoin="miter"/></svg>
<svg style="left:494px;top:125px;" width="30" height="30" viewBox="0 0 30 30"><path d="M10.2 5 L23.9 18.5 L16 19 L10.2 24.9 Z" fill="#e4e4e4"/></svg>
<svg style="left:494px;top:155px;" width="30" height="30" viewBox="0 0 30 30"><path d="M6.8 7.5 L18 11.5 L20 16.5 L23 19.5 L19.5 23.5 L16 20.5 L11 18.5 Z" fill="#dcdcdc"/><path d="M7 7.8 L15.2 15.2" stroke="#464646" stroke-width="1"/><circle cx="15.4" cy="15.4" r="1.4" fill="#464646"/><path d="M17.6 21.2 L21.4 17.6" stroke="#464646" stroke-width="0.8"/></svg>
<svg style="left:494px;top:185px;" width="30" height="30" viewBox="0 0 30 30"><path d="M8.5 20 L20.5 8 L23 10.5 L11 22.5 Z" fill="#d4d4d4"/><path d="M20.9 7.6 L22.3 6.2 Q23.5 5.2 24.6 6.3 Q25.7 7.4 24.7 8.6 L23.4 10.1 Z" fill="#eeeeee"/><path d="M6 25 L7.5 21 L10 23.5 Z" fill="#d4d4d4"/></svg>
<svg style="left:494px;top:215px;" width="30" height="30" viewBox="0 0 30 30"><rect x="7" y="7.8" width="8" height="1.3" fill="#e0e0e0"/><path d="M4.8 10 H18.4 V19.5 L16.9 21 H4.8 Z" fill="#e0e0e0"/><path d="M19 14 L25.2 9.8 V20.1 L19 17 Z" fill="#e0e0e0"/><circle cx="8" cy="13" r="1.1" fill="#333"/></svg>
<svg style="left:494px;top:245px;" width="30" height="30" viewBox="0 0 30 30"><path d="M7 22.5 L22.9 7.2" stroke="#dedede" stroke-width="1.2"/></svg>
<svg style="left:494px;top:275px;" width="30" height="30" viewBox="0 0 30 30"><rect x="7.9" y="6.9" width="14.1" height="3.1" fill="#f0f0f0"/><rect x="13.1" y="10" width="3.7" height="12.7" fill="#dadada"/></svg>
<svg style="left:494px;top:305px;" width="30" height="30" viewBox="0 0 30 30"><path d="M7 6.6 L14.4 13.1 L7 17.5 Z" fill="#dedede"/><rect x="19.2" y="5.9" width="1.9" height="1.9" fill="#eee"/><rect x="6.1" y="22" width="1.9" height="1.9" fill="#eee"/><rect x="22" y="22" width="1.9" height="1.9" fill="#eee"/><path d="M12.2 8.3 L17 7.4 M20.6 10.5 L22.9 19.7 M10 22.8 H20.1 M7 19.6 V20.8" stroke="#cfcfcf" stroke-width="0.9"/></svg>
<svg style="left:494px;top:335px;" width="30" height="30" viewBox="0 0 30 30"><defs><linearGradient id="g1" x1="0" y1="0" x2="0" y2="1"><stop offset="0" stop-color="#ececec"/><stop offset="1" stop-color="#cdcdcd"/></linearGradient></defs><rect x="8" y="8" width="14" height="14" fill="url(#g1)"/></svg>
<svg style="left:494px;top:365px;" width="30" height="30" viewBox="0 0 30 30"><circle cx="15" cy="14.8" r="8" fill="url(#g1)"/></svg>
<svg style="left:494px;top:395px;" width="30" height="30" viewBox="0 0 30 30"><path d="M15 6.1 L23.8 12.7 L21 21.9 H9.2 L6.3 12.7 Z" fill="url(#g1)"/></svg>
<svg style="left:494px;top:425px;" width="30" height="30" viewBox="0 0 30 30"><path d="M15 5.4 L17.5 12.3 L24 12.9 L18.9 17.1 L21 22.9 L15 19.3 L9.2 22.9 L11.1 17.1 L5.7 12.9 L12.5 12.3 Z" fill="#e2e2e2"/></svg>
<svg style="left:494px;top:455px;" width="30" height="30" viewBox="0 0 30 30"><path d="M21.5 14.5 A6.6 6.6 0 1 0 14.8 21.6" stroke="url(#g1)" stroke-width="3" fill="none"/></svg>
<svg style="left:494px;top:485px;" width="30" height="30" viewBox="0 0 30 30"><path d="M15 6 Q16 13.9 23.8 14.9 Q16 15.9 15 23.6 Q14 15.9 6.1 14.9 Q14 13.9 15 6 Z" fill="#e2e2e2"/></svg>
<svg style="left:494px;top:515px;" width="30" height="30" viewBox="0 0 30 30"><g fill="url(#g1)"><circle cx="15" cy="14.8" r="7.3"/><rect x="13.4" y="5.4" width="3.2" height="3.6" transform="rotate(0 15 14.8)"/><rect x="13.4" y="5.4" width="3.2" height="3.6" transform="rotate(45 15 14.8)"/><rect x="13.4" y="5.4" width="3.2" height="3.6" transform="rotate(90 15 14.8)"/><rect x="13.4" y="5.4" width="3.2" height="3.6" transform="rotate(135 15 14.8)"/><rect x="13.4" y="5.4" width="3.2" height="3.6" transform="rotate(180 15 14.8)"/><rect x="13.4" y="5.4" width="3.2" height="3.6" transform="rotate(225 15 14.8)"/><rect x="13.4" y="5.4" width="3.2" height="3.6" transform="rotate(270 15 14.8)"/><rect x="13.4" y="5.4" width="3.2" height="3.6" transform="rotate(315 15 14.8)"/></g><circle cx="15" cy="14.8" r="2.9" fill="#464646"/></svg>
<svg style="left:494px;top:545px;" width="30" height="30" viewBox="0 0 30 30"><path d="M3.9 14.9 L10 9 V12.6 H20 V9 L26 14.9 L20 20.8 V17.2 H10 V20.8 Z" fill="url(#g1)"/></svg>
<svg style="left:502px;top:605px;" width="14" height="12" viewBox="0 0 14 12"><path d="M1 1 L6 6 L1 11 M7 1 L12 6 L7 11" stroke="#bbb" stroke-width="1.1" fill="none"/></svg>
<div style="left:530px;top:85px;width:1057px;height:535px;background:#1b1b1b;"></div>
<div style="left:530px;top:85px;width:96px;height:22px;background:#3f3f3f;border-radius:3px 3px 0 0;"></div>
<div class="t" style="left:535px;top:89.0px;height:16px;line-height:16px;font-size:12px;color:#e6e6e6;">duplicator blend</div>
<div style="left:530px;top:107px;width:1057px;height:20px;background:#4a4a4a;"></div>
<div style="left:530px;top:127px;width:20px;height:471px;background:#4a4a4a;"></div>
<div class="t" style="left:535px;top:109.5px;height:15px;line-height:15px;font-size:11px;color:#bdbdbd;">px</div>
<div style="left:550px;top:127px;width:1037px;height:471px;background:#000000;"></div>
<svg style="left:550px;top:107px;" width="1037" height="20" viewBox="0 0 1037 20"><line x1="2.5" y1="16" x2="2.5" y2="20" stroke="#8f8f8f" stroke-width="1"/><line x1="14.5" y1="16" x2="14.5" y2="20" stroke="#8f8f8f" stroke-width="1"/><line x1="25.5" y1="16" x2="25.5" y2="20" stroke="#8f8f8f" stroke-width="1"/><line x1="37.5" y1="12" x2="37.5" y2="20" stroke="#9a9a9a" stroke-width="1.6"/><line x1="49.5" y1="16" x2="49.5" y2="20" stroke="#8f8f8f" stroke-width="1"/><line x1="61.5" y1="16" x2="61.5" y2="20" stroke="#8f8f8f" stroke-width="1"/><line x1="73.5" y1="16" x2="73.5" y2="20" stroke="#8f8f8f" stroke-width="1"/><line x1="84.5" y1="16" x2="84.5" y2="20" stroke="#8f8f8f" stroke-width="1"/><line x1="96.5" y1="12" x2="96.5" y2="20" stroke="#9a9a9a" stroke-width="1.6"/><line x1="108.5" y1="16" x2="108.5" y2="20" stroke="#8f8f8f" stroke-width="1"/><line x1="120.5" y1="16" x2="120.5" y2="20" stroke="#8f8f8f" stroke-width="1"/><line x1="132.5" y1="16" x2="132.5" y2="20" stroke="#8f8f8f" stroke-width="1"/><line x1="143.5" y1="16" x2="143.5" y2="20" stroke="#8f8f8f" stroke-width="1"/><line x1="155.5" y1="12" x2="155.5" y2="20" stroke="#9a9a9a" stroke-width="1.6"/><line x1="167.5" y1="16" x2="167.5" y2="20" stroke="#8f8f8f" stroke-width="1"/><line x1="179.5" y1="16" x2="179.5" y2="20" stroke="#8f8f8f" stroke-width="1"/><line x1="191.5" y1="16" x2="191.5" y2="20" stroke="#8f8f8f" stroke-width="1"/><line x1="202.5" y1="16" x2="202.5" y2="20" stroke="#8f8f8f" stroke-width="1"/><line x1="214.5" y1="12" x2="214.5" y2="20" stroke="#9a9a9a" stroke-width="1.6"/><line x1="226.5" y1="16" x2="226.5" y2="20" stroke="#8f8f8f" stroke-width="1"/><line x1="238.5" y1="16" x2="238.5" y2="20" stroke="#8f8f8f" stroke-width="1"/><line x1="250.5" y1="16" x2="250.5" y2="20" stroke="#8f8f8f" stroke-width="1"/><line x1="261.5" y1="16" x2="261.5" y2="20" stroke="#8f8f8f" stroke-width="1"/><line x1="273.5" y1="12" x2="273.5" y2="20" stroke="#9a9a9a" stroke-width="1.6"/><line x1="285.5" y1="16" x2="285.5" y2="20" stroke="#8f8f8f" stroke-width="1"/><line x1="297.5" y1="16" x2="297.5" y2="20" stroke="#8f8f8f" stroke-width="1"/><line x1="309.5" y1="16" x2="309.5" y2="20" stroke="#8f8f8f" stroke-width="1"/><line x1="320.5" y1="16" x2="320.5" y2="20" stroke="#8f8f8f" stroke-width="1"/><line x1="332.5" y1="12" x2="332.5" y2="20" stroke="#9a9a9a" stroke-width="1.6"/><line x1="344.5" y1="16" x2="344.5" y2="20" stroke="#8f8f8f" stroke-width="1"/><line x1="356.5" y1="16" x2="356.5" y2="20" stroke="#8f8f8f" stroke-width="1"/><line x1="368.5" y1="16" x2="368.5" y2="20" stroke="#8f8f8f" stroke-width="1"/><line x1="379.5" y1="16" x2="379.5" y2="20" stroke="#8f8f8f" stroke-width="1"/><line x1="391.5" y1="12" x2="391.5" y2="20" stroke="#9a9a9a" stroke-width="1.6"/><line x1="403.5" y1="16" x2="403.5" y2="20" stroke="#8f8f8f" stroke-width="1"/><line x1="415.5" y1="16" x2="415.5" y2="20" stroke="#8f8f8f" stroke-width="1"/><line x1="427.5" y1="16" x2="427.5" y2="20" stroke="#8f8f8f" stroke-width="1"/><line x1="438.5" y1="16" x2="438.5" y2="20" stroke="#8f8f8f" stroke-width="1"/><line x1="450.5" y1="12" x2="450.5" y2="20" stroke="#9a9a9a" stroke-width="1.6"/><line x1="462.5" y1="16" x2="462.5" y2="20" stroke="#8f8f8f" stroke-width="1"/><line x1="474.5" y1="16" x2="474.5" y2="20" stroke="#8f8f8f" stroke-width="1"/><line x1="486.5" y1="16" x2="486.5" y2="20" stroke="#8f8f8f" stroke-width="1"/><line x1="497.5" y1="16" x2="497.5" y2="20" stroke="#8f8f8f" stroke-width="1"/><line x1="509.5" y1="12" x2="509.5" y2="20" stroke="#9a9a9a" stroke-width="1.6"/><line x1="521.5" y1="16" x2="521.5" y2="20" stroke="#8f8f8f" stroke-width="1"/><line x1="533.5" y1="16" x2="533.5" y2="20" stroke="#8f8f8f" stroke-width="1"/><line x1="545.5" y1="16" x2="545.5" y2="20" stroke="#8f8f8f" stroke-width="1"/><line x1="556.5" y1="16" x2="556.5" y2="20" stroke="#8f8f8f" stroke-width="1"/><line x1="568.5" y1="12" x2="568.5" y2="20" stroke="#9a9a9a" stroke-width="1.6"/><line x1="580.5" y1="16" x2="580.5" y2="20" stroke="#8f8f8f" stroke-width="1"/><line x1="592.5" y1="16" x2="592.5" y2="20" stroke="#8f8f8f" stroke-width="1"/><line x1="604.5" y1="16" x2="604.5" y2="20" stroke="#8f8f8f" stroke-width="1"/><line x1="615.5" y1="16" x2="615.5" y2="20" stroke="#8f8f8f" stroke-width="1"/><line x1="627.5" y1="12" x2="627.5" y2="20" stroke="#9a9a9a" stroke-width="1.6"/><line x1="639.5" y1="16" x2="639.5" y2="20" stroke="#8f8f8f" stroke-width="1"/><line x1="651.5" y1="16" x2="651.5" y2="20" stroke="#8f8f8f" stroke-width="1"/><line x1="663.5" y1="16" x2="663.5" y2="20" stroke="#8f8f8f" stroke-width="1"/><line x1="674.5" y1="16" x2="674.5" y2="20" stroke="#8f8f8f" stroke-width="1"/><line x1="686.5" y1="12" x2="686.5" y2="20" stroke="#9a9a9a" stroke-width="1.6"/><line x1="698.5" y1="16" x2="698.5" y2="20" stroke="#8f8f8f" stroke-width="1"/><line x1="710.5" y1="16" x2="710.5" y2="20" stroke="#8f8f8f" stroke-width="1"/><line x1="722.5" y1="16" x2="722.5" y2="20" stroke="#8f8f8f" stroke-width="1"/><line x1="733.5" y1="16" x2="733.5" y2="20" stroke="#8f8f8f" stroke-width="1"/><line x1="745.5" y1="12" x2="745.5" y2="20" stroke="#9a9a9a" stroke-width="1.6"/><line x1="757.5" y1="16" x2="757.5" y2="20" stroke="#8f8f8f" stroke-width="1"/><line x1="769.5" y1="16" x2="769.5" y2="20" stroke="#8f8f8f" stroke-width="1"/><line x1="781.5" y1="16" x2="781.5" y2="20" stroke="#8f8f8f" stroke-width="1"/><line x1="792.5" y1="16" x2="792.5" y2="20" stroke="#8f8f8f" stroke-width="1"/><line x1="804.5" y1="12" x2="804.5" y2="20" stroke="#9a9a9a" stroke-width="1.6"/><line x1="816.5" y1="16" x2="816.5" y2="20" stroke="#8f8f8f" stroke-width="1"/><line x1="828.5" y1="16" x2="828.5" y2="20" stroke="#8f8f8f" stroke-width="1"/><line x1="840.5" y1="16" x2="840.5" y2="20" stroke="#8f8f8f" stroke-width="1"/><line x1="851.5" y1="16" x2="851.5" y2="20" stroke="#8f8f8f" stroke-width="1"/><line x1="863.5" y1="12" x2="863.5" y2="20" stroke="#9a9a9a" stroke-width="1.6"/><line x1="875.5" y1="16" x2="875.5" y2="20" stroke="#8f8f8f" stroke-width="1"/><line x1="887.5" y1="16" x2="887.5" y2="20" stroke="#8f8f8f" stroke-width="1"/><line x1="899.5" y1="16" x2="899.5" y2="20" stroke="#8f8f8f" stroke-width="1"/><line x1="910.5" y1="16" x2="910.5" y2="20" stroke="#8f8f8f" stroke-width="1"/><line x1="922.5" y1="12" x2="922.5" y2="20" stroke="#9a9a9a" stroke-width="1.6"/><line x1="934.5" y1="16" x2="934.5" y2="20" stroke="#8f8f8f" stroke-width="1"/><line x1="946.5" y1="16" x2="946.5" y2="20" stroke="#8f8f8f" stroke-width="1"/><line x1="958.5" y1="16" x2="958.5" y2="20" stroke="#8f8f8f" stroke-width="1"/><line x1="969.5" y1="16" x2="969.5" y2="20" stroke="#8f8f8f" stroke-width="1"/><line x1="981.5" y1="12" x2="981.5" y2="20" stroke="#9a9a9a" stroke-width="1.6"/><line x1="993.5" y1="16" x2="993.5" y2="20" stroke="#8f8f8f" stroke-width="1"/><line x1="1005.5" y1="16" x2="1005.5" y2="20" stroke="#8f8f8f" stroke-width="1"/><line x1="1017.5" y1="16" x2="1017.5" y2="20" stroke="#8f8f8f" stroke-width="1"/><line x1="1028.5" y1="16" x2="1028.5" y2="20" stroke="#8f8f8f" stroke-width="1"/></svg>
<div class="t" style="left:557.2px;width:60px;text-align:center;top:108.0px;height:14px;line-height:14px;font-size:10px;color:#c4c4c4;">-1200</div>
<div class="t" style="left:616.2px;width:60px;text-align:center;top:108.0px;height:14px;line-height:14px;font-size:10px;color:#c4c4c4;">-1050</div>
<div class="t" style="left:675.2px;width:60px;text-align:center;top:108.0px;height:14px;line-height:14px;font-size:10px;color:#c4c4c4;">-900</div>
<div class="t" style="left:734.2px;width:60px;text-align:center;top:108.0px;height:14px;line-height:14px;font-size:10px;color:#c4c4c4;">-750</div>
<div class="t" style="left:793.2px;width:60px;text-align:center;top:108.0px;height:14px;line-height:14px;font-size:10px;color:#c4c4c4;">-600</div>
<div class="t" style="left:852.2px;width:60px;text-align:center;top:108.0px;height:14px;line-height:14px;font-size:10px;color:#c4c4c4;">-450</div>
<div class="t" style="left:911.2px;width:60px;text-align:center;top:108.0px;height:14px;line-height:14px;font-size:10px;color:#c4c4c4;">-300</div>
<div class="t" style="left:970.2px;width:60px;text-align:center;top:108.0px;height:14px;line-height:14px;font-size:10px;color:#c4c4c4;">-150</div>
<div class="t" style="left:1029.2px;width:60px;text-align:center;top:108.0px;height:14px;line-height:14px;font-size:10px;color:#c4c4c4;">0</div>
<div class="t" style="left:1088.2px;width:60px;text-align:center;top:108.0px;height:14px;line-height:14px;font-size:10px;color:#c4c4c4;">150</div>
<div class="t" style="left:1147.2px;width:60px;text-align:center;top:108.0px;height:14px;line-height:14px;font-size:10px;color:#c4c4c4;">300</div>
<div class="t" style="left:1206.2px;width:60px;text-align:center;top:108.0px;height:14px;line-height:14px;font-size:10px;color:#c4c4c4;">450</div>
<div class="t" style="left:1265.2px;width:60px;text-align:center;top:108.0px;height:14px;line-height:14px;font-size:10px;color:#c4c4c4;">600</div>
<div class="t" style="left:1324.2px;width:60px;text-align:center;top:108.0px;height:14px;line-height:14px;font-size:10px;color:#c4c4c4;">750</div>
<div class="t" style="left:1383.2px;width:60px;text-align:center;top:108.0px;height:14px;line-height:14px;font-size:10px;color:#c4c4c4;">900</div>
<div class="t" style="left:1442.2px;width:60px;text-align:center;top:108.0px;height:14px;line-height:14px;font-size:10px;color:#c4c4c4;">1050</div>
<div class="t" style="left:1501.2px;width:60px;text-align:center;top:108.0px;height:14px;line-height:14px;font-size:10px;color:#c4c4c4;">1200</div>
<svg style="left:530px;top:127px;" width="20" height="470" viewBox="0 0 20 470"><line x1="12" y1="5.5" x2="20" y2="5.5" stroke="#8f8f8f" stroke-width="1.2"/><line x1="16" y1="16.5" x2="20" y2="16.5" stroke="#8f8f8f" stroke-width="1"/><line x1="16" y1="28.5" x2="20" y2="28.5" stroke="#8f8f8f" stroke-width="1"/><line x1="16" y1="40.5" x2="20" y2="40.5" stroke="#8f8f8f" stroke-width="1"/><line x1="16" y1="52.5" x2="20" y2="52.5" stroke="#8f8f8f" stroke-width="1"/><line x1="12" y1="63.5" x2="20" y2="63.5" stroke="#8f8f8f" stroke-width="1.2"/><line x1="16" y1="75.5" x2="20" y2="75.5" stroke="#8f8f8f" stroke-width="1"/><line x1="16" y1="87.5" x2="20" y2="87.5" stroke="#8f8f8f" stroke-width="1"/><line x1="16" y1="99.5" x2="20" y2="99.5" stroke="#8f8f8f" stroke-width="1"/><line x1="16" y1="111.5" x2="20" y2="111.5" stroke="#8f8f8f" stroke-width="1"/><line x1="12" y1="123.5" x2="20" y2="123.5" stroke="#8f8f8f" stroke-width="1.2"/><line x1="16" y1="134.5" x2="20" y2="134.5" stroke="#8f8f8f" stroke-width="1"/><line x1="16" y1="146.5" x2="20" y2="146.5" stroke="#8f8f8f" stroke-width="1"/><line x1="16" y1="158.5" x2="20" y2="158.5" stroke="#8f8f8f" stroke-width="1"/><line x1="16" y1="170.5" x2="20" y2="170.5" stroke="#8f8f8f" stroke-width="1"/><line x1="12" y1="181.5" x2="20" y2="181.5" stroke="#8f8f8f" stroke-width="1.2"/><line x1="16" y1="193.5" x2="20" y2="193.5" stroke="#8f8f8f" stroke-width="1"/><line x1="16" y1="205.5" x2="20" y2="205.5" stroke="#8f8f8f" stroke-width="1"/><line x1="16" y1="217.5" x2="20" y2="217.5" stroke="#8f8f8f" stroke-width="1"/><line x1="16" y1="229.5" x2="20" y2="229.5" stroke="#8f8f8f" stroke-width="1"/><line x1="12" y1="241.5" x2="20" y2="241.5" stroke="#8f8f8f" stroke-width="1.2"/><line x1="16" y1="252.5" x2="20" y2="252.5" stroke="#8f8f8f" stroke-width="1"/><line x1="16" y1="264.5" x2="20" y2="264.5" stroke="#8f8f8f" stroke-width="1"/><line x1="16" y1="276.5" x2="20" y2="276.5" stroke="#8f8f8f" stroke-width="1"/><line x1="16" y1="288.5" x2="20" y2="288.5" stroke="#8f8f8f" stroke-width="1"/><line x1="12" y1="299.5" x2="20" y2="299.5" stroke="#8f8f8f" stroke-width="1.2"/><line x1="16" y1="311.5" x2="20" y2="311.5" stroke="#8f8f8f" stroke-width="1"/><line x1="16" y1="323.5" x2="20" y2="323.5" stroke="#8f8f8f" stroke-width="1"/><line x1="16" y1="335.5" x2="20" y2="335.5" stroke="#8f8f8f" stroke-width="1"/><line x1="16" y1="347.5" x2="20" y2="347.5" stroke="#8f8f8f" stroke-width="1"/><line x1="12" y1="359.5" x2="20" y2="359.5" stroke="#8f8f8f" stroke-width="1.2"/><line x1="16" y1="370.5" x2="20" y2="370.5" stroke="#8f8f8f" stroke-width="1"/><line x1="16" y1="382.5" x2="20" y2="382.5" stroke="#8f8f8f" stroke-width="1"/><line x1="16" y1="394.5" x2="20" y2="394.5" stroke="#8f8f8f" stroke-width="1"/><line x1="16" y1="406.5" x2="20" y2="406.5" stroke="#8f8f8f" stroke-width="1"/><line x1="12" y1="417.5" x2="20" y2="417.5" stroke="#8f8f8f" stroke-width="1.2"/><line x1="16" y1="429.5" x2="20" y2="429.5" stroke="#8f8f8f" stroke-width="1"/><line x1="16" y1="441.5" x2="20" y2="441.5" stroke="#8f8f8f" stroke-width="1"/><line x1="16" y1="453.5" x2="20" y2="453.5" stroke="#8f8f8f" stroke-width="1"/><line x1="16" y1="465.5" x2="20" y2="465.5" stroke="#8f8f8f" stroke-width="1"/></svg>
<div class="t" style="left:530.5px;top:116.5px;width:14px;height:30px;"><div style="position:absolute;left:-8px;top:8px;width:30px;height:14px;line-height:14px;text-align:center;font-size:10px;color:#c4c4c4;transform:rotate(-90deg);">600</div></div>
<div class="t" style="left:530.5px;top:175.5px;width:14px;height:30px;"><div style="position:absolute;left:-8px;top:8px;width:30px;height:14px;line-height:14px;text-align:center;font-size:10px;color:#c4c4c4;transform:rotate(-90deg);">450</div></div>
<div class="t" style="left:530.5px;top:234.5px;width:14px;height:30px;"><div style="position:absolute;left:-8px;top:8px;width:30px;height:14px;line-height:14px;text-align:center;font-size:10px;color:#c4c4c4;transform:rotate(-90deg);">300</div></div>
<div class="t" style="left:530.5px;top:293.5px;width:14px;height:30px;"><div style="position:absolute;left:-8px;top:8px;width:30px;height:14px;line-height:14px;text-align:center;font-size:10px;color:#c4c4c4;transform:rotate(-90deg);">150</div></div>
<div class="t" style="left:530.5px;top:352.5px;width:14px;height:30px;"><div style="position:absolute;left:-8px;top:8px;width:30px;height:14px;line-height:14px;text-align:center;font-size:10px;color:#c4c4c4;transform:rotate(-90deg);">0</div></div>
<div class="t" style="left:530.5px;top:411.5px;width:14px;height:30px;"><div style="position:absolute;left:-8px;top:8px;width:30px;height:14px;line-height:14px;text-align:center;font-size:10px;color:#c4c4c4;transform:rotate(-90deg);">-150</div></div>
<div class="t" style="left:530.5px;top:470.5px;width:14px;height:30px;"><div style="position:absolute;left:-8px;top:8px;width:30px;height:14px;line-height:14px;text-align:center;font-size:10px;color:#c4c4c4;transform:rotate(-90deg);">-300</div></div>
<div class="t" style="left:530.5px;top:529.5px;width:14px;height:30px;"><div style="position:absolute;left:-8px;top:8px;width:30px;height:14px;line-height:14px;text-align:center;font-size:10px;color:#c4c4c4;transform:rotate(-90deg);">-450</div></div>
<div style="left:681px;top:155px;width:756px;height:426px;background:#1a1a1a;"></div>
<div style="left:907.95px;top:216.85px;width:26.5px;height:26.5px;border-radius:50%;background:#c8c8c8;"></div>
<div style="left:907.95px;top:272.05px;width:26.5px;height:26.5px;border-radius:50%;background:#c8c8c8;"></div>
<div style="left:909.95px;top:329.15px;width:22.5px;height:22.5px;border-radius:50%;background:#c8c8c8;"></div>
<div style="left:912.35px;top:386.65px;width:17.7px;height:17.7px;border-radius:50%;background:#c8c8c8;"></div>
<div style="left:906.5500000000001px;top:435.95000000000005px;width:29.3px;height:29.3px;border-radius:50%;background:#c8c8c8;"></div>
<div style="left:912.7px;top:497.3px;width:17.0px;height:17.0px;border-radius:50%;background:#c8c8c8;"></div>
<div style="left:981.4px;top:221.6px;width:17.0px;height:17.0px;border-radius:50%;background:#ffffff;"></div>
<div style="left:974.6px;top:270.0px;width:30.6px;height:30.6px;border-radius:50%;background:#ffffff;"></div>
<div style="left:981.75px;top:332.25px;width:16.3px;height:16.3px;border-radius:50%;background:#ffffff;"></div>
<div style="left:977.3px;top:382.9px;width:25.2px;height:25.2px;border-radius:50%;background:#ffffff;"></div>
<div style="left:979.4px;top:440.1px;width:21.0px;height:21.0px;border-radius:50%;background:#ffffff;"></div>
<div style="left:976.65px;top:492.55px;width:26.5px;height:26.5px;border-radius:50%;background:#ffffff;"></div>
<div style="left:1050.85px;top:221.95px;width:16.3px;height:16.3px;border-radius:50%;background:#000000;"></div>
<div style="left:1051.2px;top:277.5px;width:15.6px;height:15.6px;border-radius:50%;background:#000000;"></div>
<div style="left:1045.4px;top:326.79999999999995px;width:27.2px;height:27.2px;border-radius:50%;background:#000000;"></div>
<div style="left:1044.7px;top:381.2px;width:28.6px;height:28.6px;border-radius:50%;background:#000000;"></div>
<div style="left:1043.7px;top:435.3px;width:30.6px;height:30.6px;border-radius:50%;background:#000000;"></div>
<div style="left:1049.15px;top:495.95px;width:19.7px;height:19.7px;border-radius:50%;background:#000000;"></div>
<div style="left:1113.4px;top:215.79999999999998px;width:28.6px;height:28.6px;border-radius:50%;background:#54f77c;"></div>
<div style="left:1118.2px;top:275.8px;width:19.0px;height:19.0px;border-radius:50%;background:#54f77c;"></div>
<div style="left:1114.1000000000001px;top:326.79999999999995px;width:27.2px;height:27.2px;border-radius:50%;background:#54f77c;"></div>
<div style="left:1118.2px;top:386.0px;width:19.0px;height:19.0px;border-radius:50%;background:#54f77c;"></div>
<div style="left:1114.75px;top:437.65000000000003px;width:25.9px;height:25.9px;border-radius:50%;background:#54f77c;"></div>
<div style="left:1119.55px;top:497.65000000000003px;width:16.3px;height:16.3px;border-radius:50%;background:#54f77c;"></div>
<div style="left:1187.6px;top:220.9px;width:18.4px;height:18.4px;border-radius:50%;background:#8e8584;"></div>
<div style="left:1182.85px;top:271.35px;width:27.9px;height:27.9px;border-radius:50%;background:#8e8584;"></div>
<div style="left:1186.6px;top:330.2px;width:20.4px;height:20.4px;border-radius:50%;background:#8e8584;"></div>
<div style="left:1187.6px;top:386.3px;width:18.4px;height:18.4px;border-radius:50%;background:#8e8584;"></div>
<div style="left:1180.8px;top:434.6px;width:32.0px;height:32.0px;border-radius:50%;background:#8e8584;"></div>
<div style="left:1185.55px;top:494.55px;width:22.5px;height:22.5px;border-radius:50%;background:#8e8584;"></div>
<div class="t" style="left:569.5px;top:500.0px;height:16px;line-height:16px;font-size:11.6px;color:#eee;"><span style="color:#f0f0f0">Hold S</span> <span style="color:#585858">Direct Layer Selection</span></div>
<div class="t" style="left:569.5px;top:514.0px;height:16px;line-height:16px;font-size:11.6px;color:#eee;"><span style="color:#f0f0f0">Space</span> <span style="color:#585858">Play/ Stop</span></div>
<div class="t" style="left:569.5px;top:528.0px;height:16px;line-height:16px;font-size:11.6px;color:#eee;"><span style="color:#f0f0f0">Space + click + drag</span> <span style="color:#585858">Pan</span></div>
<div class="t" style="left:569.5px;top:542.0px;height:16px;line-height:16px;font-size:11.6px;color:#eee;"><span style="color:#f0f0f0">Alt + click + drag</span> <span style="color:#585858">Move Pivot Point</span></div>
<div class="t" style="left:569.5px;top:556.0px;height:16px;line-height:16px;font-size:11.6px;color:#eee;"><span style="color:#f0f0f0">Shift</span> <span style="color:#585858">Enable Snapping</span></div>
<div class="t" style="left:998px;top:575.5px;height:17px;line-height:17px;font-size:12.2px;color:#f0f0f0;">Viewport Quality: High</div>
<div style="left:530px;top:598px;width:1057px;height:22px;background:#434343;"></div>
<div style="left:535px;top:601px;width:78px;height:16px;background:#2b2b2b;border-radius:3px;"></div>
<div class="t" style="left:539px;top:602.0px;height:16px;line-height:16px;font-size:12px;color:#e6e6e6;">39%</div>
<svg style="left:597px;top:606px;" width="10" height="6" viewBox="0 0 10 6"><path d="M0.5 0.5 L5 5 L9.5 0.5" stroke="#ccc" fill="none"/></svg>
<div style="left:866px;top:600px;width:100px;height:18px;background:#2b2b2b;border-radius:3px;border:1px solid #1c1c1c;border-top-color:#474747;"></div>
<div style="left:886px;top:600px;width:1px;height:18px;background:#222;"></div>
<div style="left:906px;top:600px;width:1px;height:18px;background:#222;"></div>
<div style="left:926px;top:600px;width:1px;height:18px;background:#222;"></div>
<div style="left:946px;top:600px;width:1px;height:18px;background:#222;"></div>
<svg style="left:869px;top:603px;" width="14" height="12" viewBox="0 0 14 12"><rect x="1" y="1" width="1.8" height="10" fill="#e6e6e6"/><path d="M12 1 V11 L4 6 Z" fill="#e6e6e6"/></svg>
<svg style="left:889px;top:603px;" width="14" height="12" viewBox="0 0 14 12"><path d="M9 1 V11 L1 6 Z" fill="#e6e6e6"/><rect x="10.5" y="1" width="1.8" height="10" fill="#e6e6e6"/></svg>
<svg style="left:909px;top:603px;" width="14" height="12" viewBox="0 0 14 12"><path d="M3 1 V11 L11 6 Z" fill="#e6e6e6"/></svg>
<svg style="left:929px;top:603px;" width="14" height="12" viewBox="0 0 14 12"><rect x="1.5" y="1" width="1.8" height="10" fill="#e6e6e6"/><path d="M5 1 V11 L13 6 Z" fill="#e6e6e6"/></svg>
<svg style="left:949px;top:603px;" width="14" height="12" viewBox="0 0 14 12"><path d="M1.5 1 V11 L9.5 6 Z" fill="#e6e6e6"/><rect x="10.5" y="1" width="1.8" height="10" fill="#e6e6e6"/></svg>
<div style="left:971px;top:600px;width:20px;height:18px;background:#2b2b2b;border-radius:3px;border:1px solid #1c1c1c;border-top-color:#474747;"></div>
<svg style="left:972px;top:601px;" width="18" height="16" viewBox="0 0 18 16"><path d="M9 4.5 H3.5 Q2.5 4.5 2.5 5.5 V11 Q2.5 12 3.5 12 H15 Q16 12 16 11 V6.5" stroke="#e6e6e6" stroke-width="1.2" fill="none"/><path d="M9.5 1.5 L15 4.6 L9.5 8 Z" fill="#e6e6e6"/></svg>
<div style="left:1232px;top:600px;width:36px;height:18px;background:#2b2b2b;border-radius:3px;border:1px solid #1c1c1c;border-top-color:#474747;"></div>
<svg style="left:1235px;top:604px;" width="16" height="10" viewBox="0 0 16 10"><path d="M4 0 H15 V10 H4 L0 5 Z" fill="#ddd"/><circle cx="5" cy="5" r="1.5" fill="#2b2b2b"/></svg>
<div class="t" style="left:1257px;top:602.0px;height:16px;line-height:16px;font-size:12px;color:#bbb;">0</div>
<div style="left:1272px;top:600px;width:31px;height:18px;background:#2b2b2b;border-radius:3px;border:1px solid #1c1c1c;border-top-color:#474747;"></div>
<div style="left:1292px;top:600px;width:1px;height:18px;background:#222;"></div>
<svg style="left:1293px;top:605px;" width="7" height="8" viewBox="0 0 7 8"><path d="M1 0.5 L6 4 L1 7.5 Z" fill="none" stroke="#888"/></svg>
<div style="left:1307px;top:600px;width:31px;height:18px;background:#2b2b2b;border-radius:3px;border:1px solid #1c1c1c;border-top-color:#474747;"></div>
<div style="left:1327px;top:600px;width:1px;height:18px;background:#222;"></div>
<svg style="left:1328px;top:605px;" width="7" height="8" viewBox="0 0 7 8"><path d="M1 0.5 L6 4 L1 7.5 Z" fill="none" stroke="#888"/></svg>
<div style="left:1342px;top:600px;width:31px;height:18px;background:#2b2b2b;border-radius:3px;border:1px solid #1c1c1c;border-top-color:#474747;"></div>
<div style="left:1362px;top:600px;width:1px;height:18px;background:#222;"></div>
<svg style="left:1363px;top:605px;" width="7" height="8" viewBox="0 0 7 8"><path d="M1 0.5 L6 4 L1 7.5 Z" fill="none" stroke="#888"/></svg>
<div style="left:1423px;top:600px;width:31px;height:18px;background:#2b2b2b;border-radius:3px;border:1px solid #1c1c1c;border-top-color:#474747;"></div>
<div style="left:1443px;top:600px;width:1px;height:18px;background:#222;"></div>
<svg style="left:1444px;top:605px;" width="7" height="8" viewBox="0 0 7 8"><path d="M1 0.5 L6 4 L1 7.5 Z" fill="none" stroke="#888"/></svg>
<div style="left:1458px;top:600px;width:31px;height:18px;background:#2b2b2b;border-radius:3px;border:1px solid #1c1c1c;border-top-color:#474747;"></div>
<div style="left:1478px;top:600px;width:1px;height:18px;background:#222;"></div>
<svg style="left:1479px;top:605px;" width="7" height="8" viewBox="0 0 7 8"><path d="M1 0.5 L6 4 L1 7.5 Z" fill="none" stroke="#888"/></svg>
<div style="left:1493px;top:600px;width:31px;height:18px;background:#2b2b2b;border-radius:3px;border:1px solid #1c1c1c;border-top-color:#474747;"></div>
<div style="left:1513px;top:600px;width:1px;height:18px;background:#222;"></div>
<svg style="left:1514px;top:605px;" width="7" height="8" viewBox="0 0 7 8"><path d="M1 0.5 L6 4 L1 7.5 Z" fill="none" stroke="#888"/></svg>
<div style="left:1528px;top:600px;width:31px;height:18px;background:#2b2b2b;border-radius:3px;border:1px solid #1c1c1c;border-top-color:#474747;"></div>
<div style="left:1548px;top:600px;width:1px;height:18px;background:#222;"></div>
<svg style="left:1549px;top:605px;" width="7" height="8" viewBox="0 0 7 8"><path d="M1 0.5 L6 4 L1 7.5 Z" fill="none" stroke="#888"/></svg>
<div style="left:1424px;top:601px;width:19px;height:16px;background:#444444;border-radius:3px 0 0 3px;"></div>
<div style="left:1459px;top:601px;width:19px;height:16px;background:#444444;border-radius:3px 0 0 3px;"></div>
<div style="left:1494px;top:601px;width:19px;height:16px;background:#444444;border-radius:3px 0 0 3px;"></div>
<svg style="left:1275px;top:603px;" width="17" height="13" viewBox="0 0 17 13"><path d="M0 4 H3 L7 0.5 V12.5 L3 9 H0 Z" fill="#2ecc71"/><path d="M9 4 Q11 6.5 9 9 M11 2 Q14.5 6.5 11 11" stroke="#2ecc71" stroke-width="1.3" fill="none"/></svg>
<div style="left:1308px;top:601px;width:19px;height:16px;background:#444444;border-radius:3px 0 0 3px;"></div>
<div style="left:1343px;top:601px;width:19px;height:16px;background:#444444;border-radius:3px 0 0 3px;"></div>
<svg style="left:1309px;top:601px;" width="16" height="16" viewBox="0 0 16 16"><path d="M4.2 5.6 A4.4 4.4 0 0 0 10.8 12.4 L13.3 10.2" stroke="#dedede" stroke-width="2.4" fill="none" stroke-linecap="butt"/><path d="M3.2 5.2 L6.4 2.4" stroke="#dedede" stroke-width="2.4"/></svg>
<svg style="left:1345px;top:601px;" width="16" height="16" viewBox="0 0 16 16"><path d="M5 1 V15 M10.2 1 V15 M1 5.3 H15 M1 10.5 H15" stroke="#e0e0e0" stroke-width="1.3"/></svg>
<div style="left:1377px;top:600px;width:20px;height:18px;background:#2b2b2b;border-radius:3px;border:1px solid #1c1c1c;border-top-color:#474747;"></div>
<svg style="left:1379px;top:603px;" width="16" height="12" viewBox="0 0 16 12"><rect x="0" y="0" width="4" height="3.5" fill="#2ecc71"/><rect x="0" y="5" width="4" height="7" fill="#2ecc71"/><rect x="6.5" y="0.75" width="8.5" height="5" fill="none" stroke="#2ecc71" stroke-width="1.5"/><rect x="6" y="8" width="10" height="4" fill="#2ecc71"/></svg>
<div style="left:1399px;top:600px;width:21px;height:18px;background:#2b2b2b;border-radius:3px;border:1px solid #1c1c1c;border-top-color:#474747;"></div>
<svg style="left:1403px;top:603px;" width="14" height="12" viewBox="0 0 14 12"><path d="M0 1 L5 6 L0 11 Z" fill="#d0d0d0"/><path d="M5 1 L9.5 6 L5 11 M9 1 L13.5 6 L9 11" stroke="#d0d0d0" stroke-width="1.8" fill="none"/></svg>
<svg style="left:1426px;top:603px;" width="15" height="12" viewBox="0 0 15 12"><rect x="0.75" y="0.75" width="13.5" height="9" fill="none" stroke="#ddd" stroke-width="1.5"/><rect x="0" y="10" width="15" height="2" fill="#ddd"/></svg>
<svg style="left:1461px;top:602px;" width="15" height="14" viewBox="0 0 15 14"><rect x="0.5" y="0.5" width="9" height="7" fill="none" stroke="#ccc"/><rect x="2.5" y="3" width="9" height="7" fill="#2b2b2b" stroke="#ccc"/><path d="M5 12.5 H14 V6" stroke="#ccc" fill="none"/></svg>
<svg style="left:1496px;top:602px;" width="15" height="14" viewBox="0 0 15 14"><rect x="0" y="0" width="9" height="9" fill="#ddd"/><rect x="5.5" y="5.5" width="9" height="8" fill="#2b2b2b" stroke="#ddd"/></svg>
<svg style="left:1531px;top:603px;" width="12" height="12" viewBox="0 0 12 12"><rect x="0" y="0" width="3" height="3" fill="#2ecc71"/><rect x="0" y="6" width="3" height="3" fill="#2ecc71"/><rect x="3" y="3" width="3" height="3" fill="#2ecc71"/><rect x="3" y="9" width="3" height="3" fill="#2ecc71"/><rect x="6" y="0" width="3" height="3" fill="#2ecc71"/><rect x="6" y="6" width="3" height="3" fill="#2ecc71"/><rect x="9" y="3" width="3" height="3" fill="#2ecc71"/><rect x="9" y="9" width="3" height="3" fill="#2ecc71"/></svg>
<div style="left:1563px;top:600px;width:20px;height:18px;background:#2b2b2b;border-radius:3px;border:1px solid #1c1c1c;border-top-color:#474747;"></div>
<svg style="left:1566px;top:602px;" width="14" height="14" viewBox="0 0 14 14"><g fill="#ddd"><circle cx="7" cy="7" r="5"/><rect x="5.5" y="0" width="3" height="3" transform="rotate(0 7 7)"/><rect x="5.5" y="0" width="3" height="3" transform="rotate(45 7 7)"/><rect x="5.5" y="0" width="3" height="3" transform="rotate(90 7 7)"/><rect x="5.5" y="0" width="3" height="3" transform="rotate(135 7 7)"/><rect x="5.5" y="0" width="3" height="3" transform="rotate(180 7 7)"/><rect x="5.5" y="0" width="3" height="3" transform="rotate(225 7 7)"/><rect x="5.5" y="0" width="3" height="3" transform="rotate(270 7 7)"/><rect x="5.5" y="0" width="3" height="3" transform="rotate(315 7 7)"/></g><circle cx="7" cy="7" r="2" fill="#2b2b2b"/></svg>
<div style="left:1587px;top:85px;width:6px;height:535px;background:#161616;"></div>
<div style="left:1593px;top:85px;width:321px;height:439px;background:#454545;"></div>
<div style="left:1593px;top:85px;width:321px;height:22px;background:#1b1b1b;"></div>
<div style="left:1593px;top:85px;width:40px;height:22px;background:#454545;border-radius:3px 3px 0 0;"></div>
<div class="t" style="left:1598px;top:89.0px;height:16px;line-height:16px;font-size:12px;color:#e6e6e6;">Color</div>
<div style="left:1634px;top:85px;width:69px;height:22px;background:#262626;border-radius:3px 3px 0 0;"></div>
<div class="t" style="left:1639px;top:89.0px;height:16px;line-height:16px;font-size:12px;color:#e6e6e6;">Add Layers</div>
<div style="left:1899px;top:107px;width:15px;height:417px;background:#3a3a3a;"></div>
<div style="left:1901px;top:112px;width:10px;height:363px;background:#4f4f4f;border-radius:5px;"></div>
<div style="left:1646px;top:120px;width:200px;height:200px;border-radius:50%;background:conic-gradient(from 0deg,rgb(148,255,0) 0deg,rgb(161,255,0) 5deg,rgb(174,255,0) 10deg,rgb(187,255,0) 15deg,rgb(200,255,0) 20deg,rgb(213,255,0) 25deg,rgb(226,255,0) 30deg,rgb(239,255,0) 35deg,rgb(252,255,0) 40deg,rgb(255,235,0) 45deg,rgb(255,210,0) 50deg,rgb(255,185,0) 55deg,rgb(255,160,0) 60deg,rgb(255,136,0) 65deg,rgb(255,108,0) 70deg,rgb(255,81,0) 75deg,rgb(255,54,0) 80deg,rgb(255,27,0) 85deg,rgb(255,0,0) 90deg,rgb(255,0,21) 95deg,rgb(255,0,42) 100deg,rgb(255,0,63) 105deg,rgb(255,0,85) 110deg,rgb(255,0,106) 115deg,rgb(255,0,127) 120deg,rgb(255,0,148) 125deg,rgb(255,0,170) 130deg,rgb(255,0,191) 135deg,rgb(255,0,212) 140deg,rgb(255,0,233) 145deg,rgb(255,0,255) 150deg,rgb(233,0,255) 155deg,rgb(212,0,255) 160deg,rgb(191,0,255) 165deg,rgb(170,0,255) 170deg,rgb(148,0,255) 175deg,rgb(127,0,255) 180deg,rgb(106,0,255) 185deg,rgb(84,0,255) 190deg,rgb(63,0,255) 195deg,rgb(42,0,255) 200deg,rgb(21,0,255) 205deg,rgb(0,0,255) 210deg,rgb(0,23,255) 215deg,rgb(0,46,255) 220deg,rgb(0,69,255) 225deg,rgb(0,92,255) 230deg,rgb(0,115,255) 235deg,rgb(0,138,255) 240deg,rgb(0,161,255) 245deg,rgb(0,184,255) 250deg,rgb(0,207,255) 255deg,rgb(0,230,255) 260deg,rgb(0,253,255) 265deg,rgb(0,255,233) 270deg,rgb(0,255,213) 275deg,rgb(0,255,192) 280deg,rgb(0,255,172) 285deg,rgb(0,255,152) 290deg,rgb(0,255,131) 295deg,rgb(0,255,112) 300deg,rgb(0,255,93) 305deg,rgb(0,255,75) 310deg,rgb(0,255,56) 315deg,rgb(0,255,37) 320deg,rgb(0,255,18) 325deg,rgb(0,255,0) 330deg,rgb(24,255,0) 335deg,rgb(49,255,0) 340deg,rgb(74,255,0) 345deg,rgb(99,255,0) 350deg,rgb(123,255,0) 355deg,rgb(148,255,0) 360deg);"></div>
<div style="left:1671px;top:145px;width:150px;height:150px;border-radius:50%;background:#454545;"></div>
<div style="left:1702px;top:176px;width:90px;height:90px;background:linear-gradient(to right,#000,rgba(0,0,0,0)),linear-gradient(to bottom,#fff,#f00);"></div>
<svg style="left:1730px;top:169px;" width="14" height="14" viewBox="0 0 14 14"><circle cx="7" cy="7" r="5.5" stroke="#ddd" stroke-width="1.3" fill="none"/></svg>
<svg style="left:1826px;top:213px;" width="14" height="14" viewBox="0 0 14 14"><circle cx="7" cy="7" r="5.5" stroke="#fff" stroke-width="1.3" fill="none"/></svg>
<div style="left:1600px;top:333px;width:22px;height:22px;background:#575757;border-radius:3px;"></div>
<div class="t" style="left:1625px;top:337.0px;height:16px;line-height:16px;font-size:12px;color:#e6e6e6;">Dim Gray</div>
<div style="left:1871px;top:333px;width:22px;height:22px;background:#2a2a2a;border-radius:4px;border:1px solid #1c1c1c;border-top-color:#474747;"></div>
<svg style="left:1875px;top:337px;" width="14" height="14" viewBox="0 0 14 14"><path d="M2 12 L9 5" stroke="#ccc" stroke-width="1.8"/><path d="M8 3 L11 6" stroke="#ccc" stroke-width="2.5"/><circle cx="11.5" cy="2.5" r="2" fill="#ccc"/></svg>
<div style="left:1600px;top:360px;width:49px;height:18px;background:#3b3b3b;border-radius:3px;border:1px solid #2e2e2e;"></div>
<div class="t" style="left:1603px;top:362.0px;height:16px;line-height:16px;font-size:12px;color:#e6e6e6;">Hex</div>
<svg style="left:1636px;top:366px;" width="9" height="6" viewBox="0 0 9 6"><path d="M0.5 0.5 L4.5 4.5 L8.5 0.5" stroke="#bbb" fill="none"/></svg>
<div style="left:1653px;top:358px;width:240px;height:21px;background:#2a2a2a;border-radius:3px;"></div>
<div class="t" style="left:1658px;top:362.5px;height:15px;line-height:15px;font-size:11px;color:#555;">#</div>
<div class="t" style="left:1670px;top:362.0px;height:16px;line-height:16px;font-size:12px;color:#e6e6e6;">646464</div>
<div style="left:1600px;top:390px;width:236px;height:5px;background:#dcdcdc;border-radius:3px;"></div>
<div style="left:1828.5px;top:386.5px;width:11.0px;height:11.0px;border-radius:50%;background:#7ecfb0;"></div>
<div style="left:1832px;top:390px;width:4px;height:4px;border-radius:50%;background:#4f9f84;"></div>
<div style="left:1849px;top:384px;width:44px;height:16px;background:#2e2e2e;border-radius:3px;"></div>
<div class="t" style="left:1853px;top:385.0px;height:16px;line-height:16px;font-size:12px;color:#555;">A</div>
<div class="t" style="left:1865px;top:385.0px;height:16px;line-height:16px;font-size:12px;color:#e6e6e6;">255</div>
<div style="left:1597px;top:406px;width:300px;height:22px;background:#222;"></div>
<div style="left:1600px;top:409px;width:147px;height:19px;background:#3b3b3b;border-radius:4px 4px 0 0;"></div>
<div class="t" style="left:1573.0px;width:200px;text-align:center;top:411.0px;height:16px;line-height:16px;font-size:12px;color:#e6e6e6;">Swatches</div>
<div style="left:1748px;top:409px;width:146px;height:19px;background:#292929;border-radius:4px 4px 0 0;"></div>
<div class="t" style="left:1720.0px;width:200px;text-align:center;top:411.0px;height:16px;line-height:16px;font-size:12px;color:#c8c8c8;">Generator</div>
<div style="left:1598px;top:431px;width:257px;height:18px;background:#555555;border-radius:3px;"></div>
<div style="left:1600px;top:432px;width:61px;height:16px;background:#222222;border-radius:3px;"></div>
<svg style="left:1605px;top:435px;" width="11" height="10" viewBox="0 0 11 10"><rect x="0" y="0" width="1.8" height="10" fill="#2ecc71"/><rect x="3.2" y="0" width="1.8" height="10" fill="#2ecc71"/><path d="M6.5 0.5 L10 9.5" stroke="#2ecc71" stroke-width="1.8"/></svg>
<div class="t" style="left:1620px;top:433.0px;height:16px;line-height:16px;font-size:12px;color:#eaeaea;">Library</div>
<svg style="left:1671px;top:435px;" width="10" height="10" viewBox="0 0 10 10"><path d="M0 0 H5 V2 H10 V10 H0 Z" fill="#bbb"/><rect x="2" y="4" width="6" height="1" fill="#555"/><rect x="2" y="6.5" width="6" height="1" fill="#555"/></svg>
<div class="t" style="left:1685px;top:433.0px;height:16px;line-height:16px;font-size:12px;color:#e6e6e6;">Project</div>
<svg style="left:1740px;top:434px;" width="9" height="12" viewBox="0 0 9 12"><path d="M0.5 0.5 H5.5 L8.5 3.5 V11.5 H0.5 Z" fill="none" stroke="#ccc"/></svg>
<div class="t" style="left:1752px;top:433.0px;height:16px;line-height:16px;font-size:12px;color:#e6e6e6;">Scene</div>
<svg style="left:1800px;top:434px;" width="12" height="12" viewBox="0 0 12 12"><path d="M6 0.5 H11.5 V6 L6 11.5 A5.5 5.5 0 0 1 6 0.5 Z" fill="none" stroke="#ccc"/></svg>
<div class="t" style="left:1815px;top:433.0px;height:16px;line-height:16px;font-size:12px;color:#e6e6e6;">Labels</div>
<div style="left:1858px;top:431px;width:38px;height:18px;background:#555555;border-radius:3px;"></div>
<div style="left:1859px;top:432px;width:17px;height:16px;background:#222;border-radius:3px;"></div>
<svg style="left:1862px;top:435px;" width="11" height="10" viewBox="0 0 11 10"><rect x="0" y="0" width="4.5" height="4" fill="#2ecc71"/><rect x="6.5" y="0" width="4.5" height="4" fill="#2ecc71"/><rect x="0" y="6" width="4.5" height="4" fill="#2ecc71"/><rect x="6.5" y="6" width="4.5" height="4" fill="#2ecc71"/></svg>
<svg style="left:1881px;top:435px;" width="11" height="10" viewBox="0 0 11 10"><rect x="0" y="0" width="11" height="1.2" fill="#ccc"/><rect x="0" y="4.4" width="11" height="1.2" fill="#ccc"/><rect x="0" y="8.8" width="11" height="1.2" fill="#ccc"/></svg>
<div style="left:1598px;top:453px;width:276px;height:17px;background:#4b4b4b;border-radius:3px;border:1px solid #444;"></div>
<div class="t" style="left:1601px;top:454.5px;height:16px;line-height:16px;font-size:12px;color:#e6e6e6;">Simple</div>
<svg style="left:1860px;top:459px;" width="10" height="6" viewBox="0 0 10 6"><path d="M0.5 0.5 L5 5 L9.5 0.5" stroke="#ccc" fill="none"/></svg>
<div style="left:1881px;top:461px;width:2px;height:2px;background:#ccc;"></div>
<div style="left:1886px;top:461px;width:2px;height:2px;background:#ccc;"></div>
<div style="left:1891px;top:461px;width:2px;height:2px;background:#ccc;"></div>
<div style="left:1598px;top:470px;width:297px;height:54px;background:#262626;"></div>
<div style="left:1600px;top:472px;width:18px;height:18px;background:#0a73c0;border-radius:3px;"></div>
<div style="left:1622px;top:472px;width:18px;height:18px;background:#0a9ee0;border-radius:3px;"></div>
<div style="left:1644px;top:472px;width:18px;height:18px;background:#8fc06a;border-radius:3px;"></div>
<div style="left:1666px;top:472px;width:18px;height:18px;background:#f1e24a;border-radius:3px;"></div>
<div style="left:1688px;top:472px;width:18px;height:18px;background:#f07408;border-radius:3px;"></div>
<div style="left:1593px;top:524px;width:321px;height:6px;background:#161616;"></div>
<div style="left:1593px;top:530px;width:321px;height:22px;background:#1b1b1b;"></div>
<div style="left:1593px;top:530px;width:38px;height:22px;background:#454545;border-radius:3px 3px 0 0;"></div>
<div class="t" style="left:1598px;top:534.0px;height:16px;line-height:16px;font-size:12px;color:#e6e6e6;">Align</div>
<div style="left:1593px;top:552px;width:321px;height:68px;background:#454545;"></div>
<div class="t" style="left:1601px;top:564.0px;height:16px;line-height:16px;font-size:12px;color:#e6e6e6;">Alignment</div>
<div class="t" style="left:1601px;top:592.0px;height:16px;line-height:16px;font-size:12px;color:#e6e6e6;">Distribution</div>
<div style="left:1790px;top:563px;width:53px;height:17px;background:#2a2a2a;border-radius:3px;border:1px solid #1c1c1c;border-top-color:#474747;"></div>
<div style="left:1807px;top:563px;width:1px;height:17px;background:#222;"></div>
<div style="left:1825px;top:563px;width:1px;height:17px;background:#222;"></div>
<div style="left:1853px;top:563px;width:53px;height:17px;background:#2a2a2a;border-radius:3px;border:1px solid #1c1c1c;border-top-color:#474747;"></div>
<div style="left:1870px;top:563px;width:1px;height:17px;background:#222;"></div>
<div style="left:1888px;top:563px;width:1px;height:17px;background:#222;"></div>
<div style="left:1790px;top:590px;width:53px;height:17px;background:#2a2a2a;border-radius:3px;border:1px solid #1c1c1c;border-top-color:#474747;"></div>
<div style="left:1807px;top:590px;width:1px;height:17px;background:#222;"></div>
<div style="left:1825px;top:590px;width:1px;height:17px;background:#222;"></div>
<svg style="left:1793px;top:566px;" width="12" height="11" viewBox="0 0 12 11"><rect x="0" y="0" width="1.3" height="11" fill="#e0e0e0"/><rect x="2.5" y="2" width="5" height="1.6" fill="#e0e0e0"/><rect x="2.5" y="7" width="9" height="1.6" fill="#e0e0e0"/></svg>
<svg style="left:1811px;top:566px;" width="12" height="11" viewBox="0 0 12 11"><rect x="5.3" y="0" width="1.3" height="11" fill="#e0e0e0"/><rect x="2" y="2" width="8" height="1.6" fill="#e0e0e0"/><rect x="0" y="7" width="12" height="1.6" fill="#e0e0e0"/></svg>
<svg style="left:1829px;top:566px;" width="12" height="11" viewBox="0 0 12 11"><rect x="10.7" y="0" width="1.3" height="11" fill="#e0e0e0"/><rect x="4.5" y="2" width="5" height="1.6" fill="#e0e0e0"/><rect x="0.5" y="7" width="9" height="1.6" fill="#e0e0e0"/></svg>
<svg style="left:1856px;top:566px;" width="12" height="11" viewBox="0 0 12 11"><rect x="0" y="0" width="12" height="1.3" fill="#e0e0e0"/><rect x="2" y="2.5" width="1.6" height="8" fill="#e0e0e0"/><rect x="7" y="2.5" width="1.6" height="5" fill="#e0e0e0"/></svg>
<svg style="left:1874px;top:566px;" width="12" height="11" viewBox="0 0 12 11"><rect x="0" y="5" width="12" height="1.3" fill="#e0e0e0"/><rect x="2.5" y="1" width="1.6" height="9" fill="#e0e0e0"/><rect x="7.5" y="2.5" width="1.6" height="6" fill="#e0e0e0"/></svg>
<svg style="left:1892px;top:566px;" width="12" height="11" viewBox="0 0 12 11"><rect x="0" y="9.7" width="12" height="1.3" fill="#e0e0e0"/><rect x="3" y="0.5" width="1.6" height="8" fill="#e0e0e0"/><rect x="8" y="3.5" width="1.6" height="5" fill="#e0e0e0"/></svg>
<svg style="left:1793px;top:593px;" width="12" height="11" viewBox="0 0 12 11"><rect x="0" y="0" width="1.2" height="11" fill="#e0e0e0"/><rect x="10.8" y="0" width="1.2" height="11" fill="#e0e0e0"/><rect x="4" y="1" width="1.8" height="9" fill="#e0e0e0"/></svg>
<svg style="left:1811px;top:593px;" width="12" height="11" viewBox="0 0 12 11"><rect x="0" y="0" width="12" height="1.2" fill="#e0e0e0"/><rect x="0" y="9.8" width="12" height="1.2" fill="#e0e0e0"/><rect x="1" y="4.5" width="10" height="1.8" fill="#e0e0e0"/></svg>
<svg style="left:1829px;top:593px;" width="12" height="11" viewBox="0 0 12 11"><path d="M0.5 10.5 V7 H4 V4 H8 V1 H11.5" stroke="#e0e0e0" stroke-width="1.2" fill="none" stroke-dasharray="2 1"/></svg>
<div style="left:1593px;top:620px;width:321px;height:6px;background:#161616;"></div>
<div style="left:494px;top:626px;width:1420px;height:22px;background:#1b1b1b;"></div>
<div style="left:494px;top:626px;width:89px;height:22px;background:#3a3a3a;border-radius:3px 3px 0 0;"></div>
<div class="t" style="left:499px;top:630.0px;height:16px;line-height:16px;font-size:12px;color:#e6e6e6;">Scene Window</div>
<div style="left:584px;top:626px;width:100px;height:22px;background:#262626;border-radius:3px 3px 0 0;"></div>
<div class="t" style="left:589px;top:630.0px;height:16px;line-height:16px;font-size:12px;color:#e6e6e6;">JavaScript Editor</div>
<div style="left:685px;top:626px;width:111px;height:22px;background:#262626;border-radius:3px 3px 0 0;"></div>
<div class="t" style="left:690px;top:630.0px;height:16px;line-height:16px;font-size:12px;color:#e6e6e6;">Dependency Graph</div>
<div style="left:494px;top:648px;width:1420px;height:1px;background:#2ecc71;"></div>
<div style="left:494px;top:649px;width:1420px;height:1px;background:#1f6b41;"></div>
<div style="left:494px;top:650px;width:1420px;height:351px;background:#2a2a2a;"></div>
<div style="left:494px;top:650px;width:1420px;height:20px;background:#292929;"></div>
<div class="t" style="left:590px;top:652.5px;height:16px;line-height:16px;font-size:12px;color:#c9c9c9;">Composition 1</div>
<svg style="left:763px;top:655px;" width="10" height="10" viewBox="0 0 10 10"><path d="M1.5 1.5 L8.5 8.5 M8.5 1.5 L1.5 8.5" stroke="#a0a0a0" stroke-width="1.1"/></svg>
<div style="left:781px;top:653px;width:1px;height:13px;background:#888;"></div>
<div class="t" style="left:841px;top:652.5px;height:16px;line-height:16px;font-size:12px;color:#c9c9c9;">background grid animation</div>
<svg style="left:1045px;top:655px;" width="10" height="10" viewBox="0 0 10 10"><path d="M1.5 1.5 L8.5 8.5 M8.5 1.5 L1.5 8.5" stroke="#a0a0a0" stroke-width="1.1"/></svg>
<div style="left:1063px;top:653px;width:1px;height:13px;background:#888;"></div>
<div class="t" style="left:1118px;top:652.5px;height:16px;line-height:16px;font-size:12px;color:#c9c9c9;">background grid animation 1</div>
<svg style="left:1326px;top:655px;" width="10" height="10" viewBox="0 0 10 10"><path d="M1.5 1.5 L8.5 8.5 M8.5 1.5 L1.5 8.5" stroke="#a0a0a0" stroke-width="1.1"/></svg>
<div style="left:1344px;top:653px;width:1px;height:13px;background:#888;"></div>
<div class="t" style="left:1400px;top:652.5px;height:16px;line-height:16px;font-size:12px;color:#c9c9c9;">background grid animation 2</div>
<svg style="left:1608px;top:655px;" width="10" height="10" viewBox="0 0 10 10"><path d="M1.5 1.5 L8.5 8.5 M8.5 1.5 L1.5 8.5" stroke="#a0a0a0" stroke-width="1.1"/></svg>
<div style="left:1627px;top:650px;width:282px;height:20px;background:#3e3e3e;border-radius:4px 4px 0 0;"></div>
<div class="t" style="left:1657.0px;width:200px;text-align:center;top:652.5px;height:16px;line-height:16px;font-size:12px;color:#e6e6e6;">duplicator blend</div>
<svg style="left:1891px;top:655px;" width="10" height="10" viewBox="0 0 10 10"><path d="M1 1 L9 9 M9 1 L1 9" stroke="#aaa" stroke-width="1.1"/></svg>
<div style="left:494px;top:670px;width:524px;height:42px;background:#434343;"></div>
<div style="left:496px;top:672px;width:315px;height:20px;background:#2a2a2a;border-radius:10px;"></div>
<svg style="left:500px;top:675px;" width="14" height="14" viewBox="0 0 14 14"><circle cx="4.8" cy="6" r="4.6" stroke="#ddd" stroke-width="1.2" fill="none"/><path d="M8.4 9.6 L11.4 12.6" stroke="#ddd" stroke-width="2.2"/></svg>
<div class="t" style="left:520px;top:675.0px;height:16px;line-height:16px;font-size:12px;color:#8b8b8b;">Enter a layer name</div>
<div style="left:813px;top:672px;width:20px;height:20px;background:#2a2a2a;border-radius:4px;border:1px solid #1c1c1c;border-top-color:#474747;"></div>
<svg style="left:828px;top:686px;" width="4" height="4" viewBox="0 0 4 4"><path d="M4 0 V4 H0 Z" fill="#5fcfa0"/></svg>
<svg style="left:817px;top:676px;" width="11" height="11" viewBox="0 0 11 11"><path d="M5.5 0 V11 M0 5.5 H11" stroke="#eee" stroke-width="1.8"/></svg>
<div style="left:857px;top:672px;width:19px;height:19px;background:#2c2c2c;border-radius:3px;border:1px solid #1c1c1c;border-top-color:#474747;"></div>
<div style="left:880px;top:672px;width:19px;height:19px;background:#2c2c2c;border-radius:3px;border:1px solid #1c1c1c;border-top-color:#474747;"></div>
<div style="left:902px;top:672px;width:19px;height:19px;background:#2c2c2c;border-radius:3px;border:1px solid #1c1c1c;border-top-color:#474747;"></div>
<svg style="left:860px;top:675px;" width="14" height="13" viewBox="0 0 14 13"><circle cx="9" cy="5" r="4.5" fill="#ddd"/><path d="M3 6 A5 5 0 0 0 8 12" stroke="#777" stroke-width="1.3" fill="none"/><path d="M1 8 A5 5 0 0 0 5 12.5" stroke="#555" stroke-width="1.3" fill="none"/></svg>
<svg style="left:883px;top:675px;" width="14" height="13" viewBox="0 0 14 13"><circle cx="2" cy="2" r="1.1" fill="#ddd"/><circle cx="8" cy="2" r="1" fill="#ddd"/><circle cx="2" cy="7.5" r="1.1" fill="#ddd"/><path d="M8.5 5 V12 M5 8.5 H12" stroke="#eee" stroke-width="1.6"/></svg>
<svg style="left:905px;top:675px;" width="14" height="13" viewBox="0 0 14 13"><g stroke="#ddd" stroke-width="1.1" fill="none"><path d="M0 2 H4 M8 2 H14 M0 6.5 H7 M11 6.5 H14 M0 11 H3 M7 11 H14"/><circle cx="6" cy="2" r="1.6"/><circle cx="9" cy="6.5" r="1.6"/><circle cx="5" cy="11" r="1.6"/></g></svg>
<div style="left:923px;top:672px;width:94px;height:20px;background:#2a2a2a;border-radius:3px;"></div>
<div class="t" style="left:928px;top:675.5px;height:15px;line-height:15px;font-size:11px;color:#555;">F</div>
<div class="t" style="left:940px;top:675.0px;height:16px;line-height:16px;font-size:12px;color:#e6e6e6;">32</div>
<div style="left:494px;top:693px;width:524px;height:19px;background:#434343;"></div>
<svg style="left:500px;top:696px;" width="10" height="13" viewBox="0 0 10 13"><path d="M2 6 V4 A3 3 0 0 1 8 4 V6" stroke="#bdbdbd" stroke-width="1.4" fill="none"/><rect x="0.5" y="6" width="9" height="7" fill="#bdbdbd"/><rect x="4" y="8.5" width="2" height="2" fill="#444"/></svg>
<svg style="left:517px;top:698px;" width="15" height="10" viewBox="0 0 15 10"><path d="M1 5 Q7.5 -2 14 5 Q7.5 12 1 5 Z" stroke="#bdbdbd" stroke-width="1" fill="none"/><circle cx="7.5" cy="5" r="2.2" fill="#bdbdbd"/></svg>
<svg style="left:536px;top:696px;" width="13" height="14" viewBox="0 0 13 14"><path d="M6.5 1 L12 4 V10 L6.5 13 L1 10 V4 Z M1 4 L6.5 7 L12 4 M6.5 7 V13" stroke="#bdbdbd" stroke-width="1" fill="none"/></svg>
<svg style="left:556px;top:697px;" width="14" height="12" viewBox="0 0 14 12"><path d="M0 4 H3 L6 1 V11 L3 8 H0 Z" fill="#bdbdbd"/><path d="M8 3.5 Q10 6 8 8.5 M10 1.5 Q13.5 6 10 10.5" stroke="#bdbdbd" stroke-width="1.1" fill="none"/></svg>
<svg style="left:575px;top:696px;" width="13" height="13" viewBox="0 0 13 13"><path d="M1.5 11.5 L8 5" stroke="#bdbdbd" stroke-width="1.8"/><path d="M7 3 L10 6" stroke="#bdbdbd" stroke-width="2.3"/><circle cx="10.5" cy="2.5" r="2" fill="#bdbdbd"/></svg>
<svg style="left:593px;top:698px;" width="15" height="9" viewBox="0 0 15 9"><path d="M4 0 H15 V9 H4 L0 4.5 Z" fill="#bdbdbd"/><circle cx="5" cy="4.5" r="1.5" fill="#444"/></svg>
<div class="t" style="left:649px;top:696.0px;height:16px;line-height:16px;font-size:12px;color:#ececec;">Name</div>
<div style="left:494px;top:712px;width:511px;height:251px;background:#373737;"></div>
<div style="left:1005px;top:712px;width:13px;height:251px;background:#2c2c2c;"></div>
<div style="left:1007px;top:767px;width:10px;height:194px;background:#484848;border-radius:5px;"></div>
<div style="left:494px;top:712px;width:511px;height:6px;overflow:hidden;"><div class="t" style="position:absolute;left:155px;top:-9px;font-size:12px;color:#e6e6e6;line-height:16px;">Blend</div><div style="position:absolute;left:413px;top:-11px;width:84px;height:16px;background:#2a2a2a;border-radius:2px;"></div><div style="position:absolute;left:497px;top:-11px;width:9px;height:16px;background:#303030;border-radius:2px;"></div><div class="t" style="position:absolute;left:417px;top:-10px;font-size:11px;color:#6b6b6b;line-height:16px;">%</div><div class="t" style="position:absolute;left:431px;top:-10px;font-size:12px;color:#e6e6e6;line-height:16px;">0.0</div></div>
<div style="left:496px;top:722px;width:18px;height:18px;background:#2a2a2a;border-radius:3px;"></div>
<div style="left:515px;top:722px;width:18px;height:18px;background:#2a2a2a;border-radius:3px;"></div>
<div style="left:534px;top:722px;width:18px;height:18px;background:#2a2a2a;border-radius:3px;"></div>
<div style="left:573px;top:722px;width:16px;height:18px;background:#c8c8c8;border-radius:3px;"></div>
<svg style="left:593px;top:726px;" width="15" height="9" viewBox="0 0 15 9"><path d="M4 0 H15 V9 H4 L0 4.5 Z" fill="#cfcfcf"/><circle cx="5" cy="4.5" r="1.5" fill="#333"/></svg>
<div style="left:611px;top:722px;width:31px;height:18px;background:#2c2c2c;border-radius:3px;"></div>
<div style="left:626px;top:722px;width:1px;height:18px;background:#333;"></div>
<svg style="left:614px;top:728px;" width="9" height="6" viewBox="0 0 9 6"><path d="M0.5 0.5 L4.5 4.5 L8.5 0.5" stroke="#888" fill="none"/></svg>
<svg style="left:648px;top:725px;" width="14" height="12" viewBox="0 0 14 12"><path d="M0 0 H5 L6.5 2 H14 V12 H0 Z" fill="#cfcfcf"/><rect x="0" y="3" width="14" height="0.8" fill="#333"/></svg>
<div class="t" style="left:667px;top:724.0px;height:16px;line-height:16px;font-size:12px;color:#bdbdbd;">3</div>
<svg style="left:990.5px;top:725.5px;" width="11.0" height="11.0" viewBox="0 0 11.0 11.0"><circle cx="5.5" cy="5.5" r="4.5" stroke="#747474" stroke-width="1.2" fill="none"/></svg>
<div style="left:496px;top:744px;width:18px;height:18px;background:#2a2a2a;border-radius:3px;"></div>
<div style="left:515px;top:744px;width:18px;height:18px;background:#2a2a2a;border-radius:3px;"></div>
<svg style="left:518px;top:747px;" width="12" height="12" viewBox="0 0 12 12"><circle cx="6" cy="6" r="4.8" stroke="#bbb" stroke-width="1.1" fill="none"/><path d="M3.5 6 L5.5 8 L10.5 2.5" stroke="#ddd" stroke-width="1.4" fill="none"/></svg>
<div style="left:573px;top:744px;width:16px;height:18px;background:#c7ee7f;border-radius:3px;"></div>
<svg style="left:593px;top:748px;" width="15" height="9" viewBox="0 0 15 9"><path d="M4 0 H15 V9 H4 L0 4.5 Z" fill="#cfcfcf"/><circle cx="5" cy="4.5" r="1.5" fill="#333"/></svg>
<div style="left:630px;top:744px;width:31px;height:18px;background:#2c2c2c;border-radius:3px;"></div>
<div style="left:645px;top:744px;width:1px;height:18px;background:#333;"></div>
<svg style="left:633px;top:750px;" width="9" height="6" viewBox="0 0 9 6"><path d="M0.5 0.5 L4.5 4.5 L8.5 0.5" stroke="#888" fill="none"/></svg>
<div style="left:650px;top:750px;width:6px;height:6px;border-radius:50%;background:#e6e6e6;"></div>
<svg style="left:667px;top:745px;" width="14" height="14" viewBox="0 0 14 14"><rect x="0" y="0" width="2" height="2" fill="#262a26"/><rect x="0" y="2" width="2" height="2" fill="#a2f2a2"/><rect x="0" y="4" width="2" height="2" fill="#a2f2a2"/><rect x="0" y="6" width="2" height="2" fill="#262a26"/><rect x="0" y="8" width="2" height="2" fill="#a2f2a2"/><rect x="0" y="10" width="2" height="2" fill="#78b87a"/><rect x="0" y="12" width="2" height="2" fill="#a2f2a2"/><rect x="2" y="0" width="2" height="2" fill="#a2f2a2"/><rect x="2" y="2" width="2" height="2" fill="#262a26"/><rect x="2" y="4" width="2" height="2" fill="#78b87a"/><rect x="2" y="6" width="2" height="2" fill="#78b87a"/><rect x="2" y="8" width="2" height="2" fill="#78b87a"/><rect x="2" y="10" width="2" height="2" fill="#a2f2a2"/><rect x="2" y="12" width="2" height="2" fill="#262a26"/><rect x="4" y="0" width="2" height="2" fill="#a2f2a2"/><rect x="4" y="2" width="2" height="2" fill="#262a26"/><rect x="4" y="4" width="2" height="2" fill="#78b87a"/><rect x="4" y="6" width="2" height="2" fill="#a2f2a2"/><rect x="4" y="8" width="2" height="2" fill="#78b87a"/><rect x="4" y="10" width="2" height="2" fill="#262a26"/><rect x="4" y="12" width="2" height="2" fill="#a2f2a2"/><rect x="6" y="0" width="2" height="2" fill="#78b87a"/><rect x="6" y="2" width="2" height="2" fill="#78b87a"/><rect x="6" y="4" width="2" height="2" fill="#78b87a"/><rect x="6" y="6" width="2" height="2" fill="#262a26"/><rect x="6" y="8" width="2" height="2" fill="#262a26"/><rect x="6" y="10" width="2" height="2" fill="#78b87a"/><rect x="6" y="12" width="2" height="2" fill="#a2f2a2"/><rect x="8" y="0" width="2" height="2" fill="#262a26"/><rect x="8" y="2" width="2" height="2" fill="#78b87a"/><rect x="8" y="4" width="2" height="2" fill="#a2f2a2"/><rect x="8" y="6" width="2" height="2" fill="#78b87a"/><rect x="8" y="8" width="2" height="2" fill="#78b87a"/><rect x="8" y="10" width="2" height="2" fill="#78b87a"/><rect x="8" y="12" width="2" height="2" fill="#78b87a"/><rect x="10" y="0" width="2" height="2" fill="#a2f2a2"/><rect x="10" y="2" width="2" height="2" fill="#262a26"/><rect x="10" y="4" width="2" height="2" fill="#a2f2a2"/><rect x="10" y="6" width="2" height="2" fill="#262a26"/><rect x="10" y="8" width="2" height="2" fill="#78b87a"/><rect x="10" y="10" width="2" height="2" fill="#262a26"/><rect x="10" y="12" width="2" height="2" fill="#78b87a"/><rect x="12" y="0" width="2" height="2" fill="#262a26"/><rect x="12" y="2" width="2" height="2" fill="#a2f2a2"/><rect x="12" y="4" width="2" height="2" fill="#a2f2a2"/><rect x="12" y="6" width="2" height="2" fill="#a2f2a2"/><rect x="12" y="8" width="2" height="2" fill="#262a26"/><rect x="12" y="10" width="2" height="2" fill="#a2f2a2"/><rect x="12" y="12" width="2" height="2" fill="#78b87a"/></svg>
<div class="t" style="left:686px;top:746.0px;height:16px;line-height:16px;font-size:12px;color:#e6e6e6;">TransitionNoise</div>
<div style="left:965px;top:745px;width:21px;height:16px;background:#2a2a2a;border-radius:3px;"></div>
<div style="left:975px;top:745px;width:1px;height:16px;background:#333;"></div>
<svg style="left:967px;top:748px;" width="8" height="10" viewBox="0 0 8 10"><path d="M7 1 H4 L1 5 L4 9 H7 Z" fill="#777"/></svg>
<svg style="left:977px;top:748px;" width="8" height="10" viewBox="0 0 8 10"><path d="M1 1 H4 L7 5 L4 9 H1 Z" fill="#cf5ce6"/></svg>
<svg style="left:990.5px;top:747.5px;" width="11.0" height="11.0" viewBox="0 0 11.0 11.0"><circle cx="5.5" cy="5.5" r="4.5" stroke="#747474" stroke-width="1.2" fill="none"/></svg>
<svg style="left:655px;top:766px;" width="9" height="12" viewBox="0 0 9 12"><path d="M0.5 0 V10.5 H9" stroke="#aaa" stroke-dasharray="1 1" fill="none"/></svg>
<div class="t" style="left:666px;top:768.0px;height:16px;line-height:16px;font-size:12px;color:#e6e6e6;">Strength</div>
<div style="left:907px;top:767px;width:84px;height:16px;background:#2a2a2a;border-radius:2px;"></div>
<div style="left:991px;top:767px;width:9px;height:16px;background:#303030;border-radius:0 2px 2px 0;"></div>
<div class="t" style="left:911px;top:768.5px;height:15px;line-height:15px;font-size:11px;color:#6b6b6b;">%</div>
<div class="t" style="left:925px;top:768.0px;height:16px;line-height:16px;font-size:12px;color:#e6e6e6;">0.0</div>
<svg style="left:978px;top:771px;" width="9" height="9" viewBox="0 0 9 9"><path d="M4.5 0.5 L8.5 4.5 L4.5 8.5 L0.5 4.5 Z" fill="#cfcfcf"/></svg>
<svg style="left:992px;top:771px;" width="6" height="9" viewBox="0 0 6 9"><path d="M0 0.5 H2 L5.5 4.5 L2 8.5 H0 Z" fill="#777"/></svg>
<div style="left:496px;top:788px;width:18px;height:18px;background:#2a2a2a;border-radius:3px;"></div>
<div style="left:515px;top:788px;width:18px;height:18px;background:#2a2a2a;border-radius:3px;"></div>
<svg style="left:518px;top:791px;" width="12" height="12" viewBox="0 0 12 12"><circle cx="6" cy="6" r="4.8" stroke="#bbb" stroke-width="1.1" fill="none"/><path d="M3.5 6 L5.5 8 L10.5 2.5" stroke="#ddd" stroke-width="1.4" fill="none"/></svg>
<div style="left:573px;top:788px;width:16px;height:18px;background:#c7ee7f;border-radius:3px;"></div>
<svg style="left:593px;top:792px;" width="15" height="9" viewBox="0 0 15 9"><path d="M4 0 H15 V9 H4 L0 4.5 Z" fill="#cfcfcf"/><circle cx="5" cy="4.5" r="1.5" fill="#333"/></svg>
<svg style="left:667px;top:790px;" width="14" height="14" viewBox="0 0 14 14"><path d="M2 0.5 H12 L7 5 Z" fill="#5fcf6f"/><rect x="6.3" y="4" width="1.4" height="10" fill="#ccc"/><rect x="1" y="6" width="1.2" height="1.2" fill="#ccc"/><rect x="11.8" y="6" width="1.2" height="1.2" fill="#ccc"/></svg>
<div class="t" style="left:686px;top:790.0px;height:16px;line-height:16px;font-size:12px;color:#e6e6e6;">Frame [Start Angle]</div>
<div style="left:965px;top:789px;width:21px;height:16px;background:#2a2a2a;border-radius:3px;"></div>
<div style="left:975px;top:789px;width:1px;height:16px;background:#333;"></div>
<svg style="left:967px;top:792px;" width="8" height="10" viewBox="0 0 8 10"><path d="M7 1 H4 L1 5 L4 9 H7 Z" fill="#777"/></svg>
<svg style="left:977px;top:792px;" width="8" height="10" viewBox="0 0 8 10"><path d="M1 1 H4 L7 5 L4 9 H1 Z" fill="#cf5ce6"/></svg>
<svg style="left:990.5px;top:791.5px;" width="11.0" height="11.0" viewBox="0 0 11.0 11.0"><circle cx="5.5" cy="5.5" r="4.5" stroke="#747474" stroke-width="1.2" fill="none"/></svg>
<div style="left:496px;top:810px;width:18px;height:18px;background:#2a2a2a;border-radius:3px;"></div>
<div style="left:515px;top:810px;width:18px;height:18px;background:#2a2a2a;border-radius:3px;"></div>
<div style="left:534px;top:810px;width:18px;height:18px;background:#2a2a2a;border-radius:3px;"></div>
<svg style="left:517px;top:814px;" width="15" height="10" viewBox="0 0 15 10"><path d="M1 5 Q7.5 -2 14 5 Q7.5 12 1 5 Z" stroke="#4e4e4e" stroke-width="1" fill="none"/><circle cx="7.5" cy="5" r="2.2" fill="#4e4e4e"/></svg>
<div style="left:573px;top:810px;width:16px;height:18px;background:#fee27e;border-radius:3px;"></div>
<svg style="left:593px;top:814px;" width="15" height="9" viewBox="0 0 15 9"><path d="M4 0 H15 V9 H4 L0 4.5 Z" fill="#cfcfcf"/><circle cx="5" cy="4.5" r="1.5" fill="#333"/></svg>
<svg style="left:667px;top:812px;" width="14" height="14" viewBox="0 0 14 14"><rect x="0.0" y="0.0" width="2" height="2" fill="#e0c96a"/><rect x="0.0" y="5.6" width="2" height="2" fill="#e0c96a"/><rect x="0.0" y="11.2" width="2" height="2" fill="#e0c96a"/><rect x="5.6" y="0.0" width="2" height="2" fill="#e0c96a"/><rect x="5.6" y="5.6" width="2" height="2" fill="#e0c96a"/><rect x="5.6" y="11.2" width="2" height="2" fill="#e0c96a"/><rect x="11.2" y="0.0" width="2" height="2" fill="#e0c96a"/><rect x="11.2" y="5.6" width="2" height="2" fill="#e0c96a"/><rect x="11.2" y="11.2" width="2" height="2" fill="#e0c96a"/></svg>
<div class="t" style="left:686px;top:812.0px;height:16px;line-height:16px;font-size:12px;color:#9a9a9a;">RingDuplicator</div>
<div style="left:965px;top:811px;width:21px;height:16px;background:#2a2a2a;border-radius:3px;"></div>
<div style="left:975px;top:811px;width:1px;height:16px;background:#333;"></div>
<svg style="left:967px;top:814px;" width="8" height="10" viewBox="0 0 8 10"><path d="M7 1 H4 L1 5 L4 9 H7 Z" fill="#e0c070"/></svg>
<svg style="left:977px;top:814px;" width="8" height="10" viewBox="0 0 8 10"><path d="M1 1 H4 L7 5 L4 9 H1 Z" fill="#cf5ce6"/></svg>
<svg style="left:990.5px;top:813.5px;" width="11.0" height="11.0" viewBox="0 0 11.0 11.0"><circle cx="5.5" cy="5.5" r="4.5" stroke="#747474" stroke-width="1.2" fill="none"/></svg>
<div style="left:496px;top:832px;width:18px;height:18px;background:#2a2a2a;border-radius:3px;"></div>
<div style="left:515px;top:832px;width:18px;height:18px;background:#2a2a2a;border-radius:3px;"></div>
<div style="left:534px;top:832px;width:18px;height:18px;background:#2a2a2a;border-radius:3px;"></div>
<div style="left:573px;top:832px;width:16px;height:18px;background:#fee27e;border-radius:3px;"></div>
<svg style="left:593px;top:836px;" width="15" height="9" viewBox="0 0 15 9"><path d="M4 0 H15 V9 H4 L0 4.5 Z" fill="#cfcfcf"/><circle cx="5" cy="4.5" r="1.5" fill="#333"/></svg>
<svg style="left:667px;top:834px;" width="14" height="14" viewBox="0 0 14 14"><rect x="0.7" y="0.7" width="12.6" height="12.6" fill="none" stroke="#e0c96a" stroke-width="1.3" stroke-dasharray="3 2"/></svg>
<div class="t" style="left:686px;top:834.0px;height:16px;line-height:16px;font-size:12px;color:#9a9a9a;">Ellipse Shape 2</div>
<div style="left:965px;top:833px;width:21px;height:16px;background:#2a2a2a;border-radius:3px;"></div>
<div style="left:975px;top:833px;width:1px;height:16px;background:#333;"></div>
<svg style="left:967px;top:836px;" width="8" height="10" viewBox="0 0 8 10"><path d="M7 1 H4 L1 5 L4 9 H7 Z" fill="#777"/></svg>
<svg style="left:977px;top:836px;" width="8" height="10" viewBox="0 0 8 10"><path d="M1 1 H4 L7 5 L4 9 H1 Z" fill="#cf5ce6"/></svg>
<svg style="left:990.5px;top:835.5px;" width="11.0" height="11.0" viewBox="0 0 11.0 11.0"><circle cx="5.5" cy="5.5" r="4.5" stroke="#747474" stroke-width="1.2" fill="none"/></svg>
<div style="left:496px;top:854px;width:18px;height:18px;background:#2a2a2a;border-radius:3px;"></div>
<div style="left:515px;top:854px;width:18px;height:18px;background:#2a2a2a;border-radius:3px;"></div>
<svg style="left:518px;top:857px;" width="12" height="12" viewBox="0 0 12 12"><circle cx="6" cy="6" r="4.8" stroke="#bbb" stroke-width="1.1" fill="none"/><path d="M3.5 6 L5.5 8 L10.5 2.5" stroke="#ddd" stroke-width="1.4" fill="none"/></svg>
<div style="left:573px;top:854px;width:16px;height:18px;background:#c7ee7f;border-radius:3px;"></div>
<svg style="left:593px;top:858px;" width="15" height="9" viewBox="0 0 15 9"><path d="M4 0 H15 V9 H4 L0 4.5 Z" fill="#cfcfcf"/><circle cx="5" cy="4.5" r="1.5" fill="#333"/></svg>
<div style="left:611px;top:854px;width:31px;height:18px;background:#2c2c2c;border-radius:3px;"></div>
<div style="left:626px;top:854px;width:1px;height:18px;background:#333;"></div>
<svg style="left:616px;top:859px;" width="6" height="9" viewBox="0 0 6 9"><path d="M0.5 0.5 L4.5 4.5 L0.5 8.5" stroke="#888" fill="none"/></svg>
<div style="left:631px;top:860px;width:6px;height:6px;border-radius:50%;background:#e6e6e6;"></div>
<svg style="left:648px;top:856px;" width="14" height="14" viewBox="0 0 14 14"><rect x="0" y="0" width="1.6" height="1.6" fill="#5fcf6f"/><rect x="0" y="5.5" width="1.6" height="1.6" fill="#5fcf6f"/><rect x="0" y="11" width="1.6" height="1.6" fill="#5fcf6f"/><rect x="12.4" y="0" width="1.6" height="1.6" fill="#ddd"/><rect x="12.4" y="5.5" width="1.6" height="1.6" fill="#ddd"/><rect x="12.4" y="11" width="1.6" height="1.6" fill="#ddd"/><path d="M3.5 1 L9.5 6 M9.5 1 L3.5 6" stroke="#ccc" stroke-width="1"/><rect x="3.5" y="11" width="7" height="1.6" fill="#bbb"/></svg>
<div class="t" style="left:667px;top:856.0px;height:16px;line-height:16px;font-size:12px;color:#e6e6e6;">2to3</div>
<div style="left:965px;top:855px;width:21px;height:16px;background:#2a2a2a;border-radius:3px;"></div>
<div style="left:975px;top:855px;width:1px;height:16px;background:#333;"></div>
<svg style="left:967px;top:858px;" width="8" height="10" viewBox="0 0 8 10"><path d="M7 1 H4 L1 5 L4 9 H7 Z" fill="#e0c070"/></svg>
<svg style="left:977px;top:858px;" width="8" height="10" viewBox="0 0 8 10"><path d="M1 1 H4 L7 5 L4 9 H1 Z" fill="#cf5ce6"/></svg>
<svg style="left:990.5px;top:857.5px;" width="11.0" height="11.0" viewBox="0 0 11.0 11.0"><circle cx="5.5" cy="5.5" r="4.5" stroke="#747474" stroke-width="1.2" fill="none"/></svg>
<div style="left:496px;top:876px;width:18px;height:18px;background:#2a2a2a;border-radius:3px;"></div>
<div style="left:515px;top:876px;width:18px;height:18px;background:#2a2a2a;border-radius:3px;"></div>
<div style="left:534px;top:876px;width:18px;height:18px;background:#2a2a2a;border-radius:3px;"></div>
<div style="left:573px;top:876px;width:16px;height:18px;background:#c8c8c8;border-radius:3px;"></div>
<svg style="left:593px;top:880px;" width="15" height="9" viewBox="0 0 15 9"><path d="M4 0 H15 V9 H4 L0 4.5 Z" fill="#cfcfcf"/><circle cx="5" cy="4.5" r="1.5" fill="#333"/></svg>
<div style="left:611px;top:876px;width:31px;height:18px;background:#2c2c2c;border-radius:3px;"></div>
<div style="left:626px;top:876px;width:1px;height:18px;background:#333;"></div>
<svg style="left:616px;top:881px;" width="6" height="9" viewBox="0 0 6 9"><path d="M0.5 0.5 L4.5 4.5 L0.5 8.5" stroke="#888" fill="none"/></svg>
<svg style="left:648px;top:879px;" width="14" height="12" viewBox="0 0 14 12"><path d="M0 0 H5 L6.5 2 H14 V12 H0 Z" fill="#cfcfcf"/><rect x="0" y="3" width="14" height="0.8" fill="#333"/></svg>
<div class="t" style="left:667px;top:878.0px;height:16px;line-height:16px;font-size:12px;color:#bdbdbd;">2</div>
<svg style="left:990.5px;top:879.5px;" width="11.0" height="11.0" viewBox="0 0 11.0 11.0"><circle cx="5.5" cy="5.5" r="4.5" stroke="#747474" stroke-width="1.2" fill="none"/></svg>
<div style="left:496px;top:898px;width:18px;height:18px;background:#2a2a2a;border-radius:3px;"></div>
<div style="left:515px;top:898px;width:18px;height:18px;background:#2a2a2a;border-radius:3px;"></div>
<svg style="left:518px;top:901px;" width="12" height="12" viewBox="0 0 12 12"><circle cx="6" cy="6" r="4.8" stroke="#bbb" stroke-width="1.1" fill="none"/><path d="M3.5 6 L5.5 8 L10.5 2.5" stroke="#ddd" stroke-width="1.4" fill="none"/></svg>
<div style="left:573px;top:898px;width:16px;height:18px;background:#c7ee7f;border-radius:3px;"></div>
<svg style="left:593px;top:902px;" width="15" height="9" viewBox="0 0 15 9"><path d="M4 0 H15 V9 H4 L0 4.5 Z" fill="#cfcfcf"/><circle cx="5" cy="4.5" r="1.5" fill="#333"/></svg>
<div style="left:611px;top:898px;width:31px;height:18px;background:#2c2c2c;border-radius:3px;"></div>
<div style="left:626px;top:898px;width:1px;height:18px;background:#333;"></div>
<svg style="left:616px;top:903px;" width="6" height="9" viewBox="0 0 6 9"><path d="M0.5 0.5 L4.5 4.5 L0.5 8.5" stroke="#888" fill="none"/></svg>
<div style="left:631px;top:904px;width:6px;height:6px;border-radius:50%;background:#e6e6e6;"></div>
<svg style="left:648px;top:900px;" width="14" height="14" viewBox="0 0 14 14"><rect x="0" y="0" width="1.6" height="1.6" fill="#5fcf6f"/><rect x="0" y="5.5" width="1.6" height="1.6" fill="#5fcf6f"/><rect x="0" y="11" width="1.6" height="1.6" fill="#5fcf6f"/><rect x="12.4" y="0" width="1.6" height="1.6" fill="#ddd"/><rect x="12.4" y="5.5" width="1.6" height="1.6" fill="#ddd"/><rect x="12.4" y="11" width="1.6" height="1.6" fill="#ddd"/><path d="M3.5 1 L9.5 6 M9.5 1 L3.5 6" stroke="#ccc" stroke-width="1"/><rect x="3.5" y="11" width="7" height="1.6" fill="#bbb"/></svg>
<div class="t" style="left:667px;top:900.0px;height:16px;line-height:16px;font-size:12px;color:#e6e6e6;">1to2 &amp; 4to1</div>
<div style="left:965px;top:899px;width:21px;height:16px;background:#2a2a2a;border-radius:3px;"></div>
<div style="left:975px;top:899px;width:1px;height:16px;background:#333;"></div>
<svg style="left:967px;top:902px;" width="8" height="10" viewBox="0 0 8 10"><path d="M7 1 H4 L1 5 L4 9 H7 Z" fill="#e0c070"/></svg>
<svg style="left:977px;top:902px;" width="8" height="10" viewBox="0 0 8 10"><path d="M1 1 H4 L7 5 L4 9 H1 Z" fill="#cf5ce6"/></svg>
<svg style="left:990.5px;top:901.5px;" width="11.0" height="11.0" viewBox="0 0 11.0 11.0"><circle cx="5.5" cy="5.5" r="4.5" stroke="#747474" stroke-width="1.2" fill="none"/></svg>
<div style="left:496px;top:920px;width:18px;height:18px;background:#2a2a2a;border-radius:3px;"></div>
<div style="left:515px;top:920px;width:18px;height:18px;background:#2a2a2a;border-radius:3px;"></div>
<div style="left:534px;top:920px;width:18px;height:18px;background:#2a2a2a;border-radius:3px;"></div>
<svg style="left:517px;top:924px;" width="15" height="10" viewBox="0 0 15 10"><path d="M1 5 Q7.5 -2 14 5 Q7.5 12 1 5 Z" stroke="#d8d8d8" stroke-width="1" fill="none"/><circle cx="7.5" cy="5" r="2.2" fill="#d8d8d8"/></svg>
<div style="left:573px;top:920px;width:16px;height:18px;background:#c8c8c8;border-radius:3px;"></div>
<svg style="left:593px;top:924px;" width="15" height="9" viewBox="0 0 15 9"><path d="M4 0 H15 V9 H4 L0 4.5 Z" fill="#cfcfcf"/><circle cx="5" cy="4.5" r="1.5" fill="#333"/></svg>
<div style="left:611px;top:920px;width:31px;height:18px;background:#2c2c2c;border-radius:3px;"></div>
<div style="left:626px;top:920px;width:1px;height:18px;background:#333;"></div>
<svg style="left:616px;top:925px;" width="6" height="9" viewBox="0 0 6 9"><path d="M0.5 0.5 L4.5 4.5 L0.5 8.5" stroke="#888" fill="none"/></svg>
<svg style="left:648px;top:923px;" width="14" height="12" viewBox="0 0 14 12"><path d="M0 0 H5 L6.5 2 H14 V12 H0 Z" fill="#cfcfcf"/><rect x="0" y="3" width="14" height="0.8" fill="#333"/></svg>
<div class="t" style="left:667px;top:922.0px;height:16px;line-height:16px;font-size:12px;color:#e6e6e6;">1</div>
<svg style="left:990.5px;top:923.5px;" width="11.0" height="11.0" viewBox="0 0 11.0 11.0"><circle cx="5.5" cy="5.5" r="4.5" stroke="#747474" stroke-width="1.2" fill="none"/></svg>
<div style="left:496px;top:942px;width:18px;height:18px;background:#2a2a2a;border-radius:3px;"></div>
<div style="left:515px;top:942px;width:18px;height:18px;background:#2a2a2a;border-radius:3px;"></div>
<div style="left:534px;top:942px;width:18px;height:18px;background:#2a2a2a;border-radius:3px;"></div>
<svg style="left:517px;top:946px;" width="15" height="10" viewBox="0 0 15 10"><path d="M1 5 Q7.5 -2 14 5 Q7.5 12 1 5 Z" stroke="#d8d8d8" stroke-width="1" fill="none"/><circle cx="7.5" cy="5" r="2.2" fill="#d8d8d8"/></svg>
<div style="left:573px;top:942px;width:16px;height:18px;background:#fee27e;border-radius:3px;"></div>
<svg style="left:593px;top:946px;" width="15" height="9" viewBox="0 0 15 9"><path d="M4 0 H15 V9 H4 L0 4.5 Z" fill="#cfcfcf"/><circle cx="5" cy="4.5" r="1.5" fill="#333"/></svg>
<svg style="left:648px;top:944px;" width="14" height="14" viewBox="0 0 14 14"><rect x="0.6" y="0.6" width="12.8" height="12.8" fill="#3a3a3a" stroke="#e0c96a" stroke-width="1.2"/><rect x="3" y="3" width="8" height="8" fill="#ccc"/></svg>
<div class="t" style="left:667px;top:944.0px;height:16px;line-height:16px;font-size:12px;color:#e6e6e6;">Background Shape</div>
<svg style="left:990.5px;top:945.5px;" width="11.0" height="11.0" viewBox="0 0 11.0 11.0"><circle cx="5.5" cy="5.5" r="4.5" stroke="#747474" stroke-width="1.2" fill="none"/></svg>
<div style="left:494px;top:963px;width:524px;height:13px;background:#2d2d2d;"></div>
<div style="left:496px;top:964px;width:508px;height:10px;background:#4e4e4e;border-radius:5px;"></div>
<div style="left:1018px;top:670px;width:8px;height:306px;background:#1f1f1f;"></div>
<div style="left:1018px;top:712px;width:5px;height:251px;background:#2c2c2c;"></div>
<div style="left:1021px;top:827px;width:2px;height:17px;background:repeating-linear-gradient(to bottom,#7a7a7a 0,#7a7a7a 2px,transparent 2px,transparent 3px);"></div>
<div style="left:1026px;top:670px;width:888px;height:306px;background:#282828;"></div>
<div style="left:1026px;top:670px;width:8px;height:306px;background:#1c1c1c;"></div>
<svg style="left:1026px;top:670px;" width="888" height="24" viewBox="0 0 888 24"><line x1="8.5" y1="16" x2="8.5" y2="24" stroke="#8a8a8a" stroke-width="1.2"/><line x1="18.5" y1="20" x2="18.5" y2="24" stroke="#8a8a8a" stroke-width="1"/><line x1="29.5" y1="20" x2="29.5" y2="24" stroke="#8a8a8a" stroke-width="1"/><line x1="39.5" y1="20" x2="39.5" y2="24" stroke="#8a8a8a" stroke-width="1"/><line x1="50.5" y1="20" x2="50.5" y2="24" stroke="#8a8a8a" stroke-width="1"/><line x1="60.5" y1="16" x2="60.5" y2="24" stroke="#8a8a8a" stroke-width="1.2"/><line x1="70.5" y1="20" x2="70.5" y2="24" stroke="#8a8a8a" stroke-width="1"/><line x1="81.5" y1="20" x2="81.5" y2="24" stroke="#8a8a8a" stroke-width="1"/><line x1="91.5" y1="20" x2="91.5" y2="24" stroke="#8a8a8a" stroke-width="1"/><line x1="102.5" y1="20" x2="102.5" y2="24" stroke="#8a8a8a" stroke-width="1"/><line x1="112.5" y1="16" x2="112.5" y2="24" stroke="#8a8a8a" stroke-width="1.2"/><line x1="123.5" y1="20" x2="123.5" y2="24" stroke="#8a8a8a" stroke-width="1"/><line x1="133.5" y1="20" x2="133.5" y2="24" stroke="#8a8a8a" stroke-width="1"/><line x1="144.5" y1="20" x2="144.5" y2="24" stroke="#8a8a8a" stroke-width="1"/><line x1="154.5" y1="20" x2="154.5" y2="24" stroke="#8a8a8a" stroke-width="1"/><line x1="164.5" y1="16" x2="164.5" y2="24" stroke="#8a8a8a" stroke-width="1.2"/><line x1="175.5" y1="20" x2="175.5" y2="24" stroke="#8a8a8a" stroke-width="1"/><line x1="185.5" y1="20" x2="185.5" y2="24" stroke="#8a8a8a" stroke-width="1"/><line x1="196.5" y1="20" x2="196.5" y2="24" stroke="#8a8a8a" stroke-width="1"/><line x1="206.5" y1="20" x2="206.5" y2="24" stroke="#8a8a8a" stroke-width="1"/><line x1="217.5" y1="16" x2="217.5" y2="24" stroke="#8a8a8a" stroke-width="1.2"/><line x1="227.5" y1="20" x2="227.5" y2="24" stroke="#8a8a8a" stroke-width="1"/><line x1="238.5" y1="20" x2="238.5" y2="24" stroke="#8a8a8a" stroke-width="1"/><line x1="248.5" y1="20" x2="248.5" y2="24" stroke="#8a8a8a" stroke-width="1"/><line x1="259.5" y1="20" x2="259.5" y2="24" stroke="#8a8a8a" stroke-width="1"/><line x1="269.5" y1="16" x2="269.5" y2="24" stroke="#8a8a8a" stroke-width="1.2"/><line x1="279.5" y1="20" x2="279.5" y2="24" stroke="#8a8a8a" stroke-width="1"/><line x1="290.5" y1="20" x2="290.5" y2="24" stroke="#8a8a8a" stroke-width="1"/><line x1="300.5" y1="20" x2="300.5" y2="24" stroke="#8a8a8a" stroke-width="1"/><line x1="311.5" y1="20" x2="311.5" y2="24" stroke="#8a8a8a" stroke-width="1"/><line x1="321.5" y1="16" x2="321.5" y2="24" stroke="#8a8a8a" stroke-width="1.2"/><line x1="332.5" y1="20" x2="332.5" y2="24" stroke="#8a8a8a" stroke-width="1"/><line x1="342.5" y1="20" x2="342.5" y2="24" stroke="#8a8a8a" stroke-width="1"/><line x1="353.5" y1="20" x2="353.5" y2="24" stroke="#8a8a8a" stroke-width="1"/><line x1="363.5" y1="20" x2="363.5" y2="24" stroke="#8a8a8a" stroke-width="1"/><line x1="374.5" y1="16" x2="374.5" y2="24" stroke="#8a8a8a" stroke-width="1.2"/><line x1="384.5" y1="20" x2="384.5" y2="24" stroke="#8a8a8a" stroke-width="1"/><line x1="394.5" y1="20" x2="394.5" y2="24" stroke="#8a8a8a" stroke-width="1"/><line x1="405.5" y1="20" x2="405.5" y2="24" stroke="#8a8a8a" stroke-width="1"/><line x1="415.5" y1="20" x2="415.5" y2="24" stroke="#8a8a8a" stroke-width="1"/><line x1="426.5" y1="16" x2="426.5" y2="24" stroke="#8a8a8a" stroke-width="1.2"/><line x1="436.5" y1="20" x2="436.5" y2="24" stroke="#8a8a8a" stroke-width="1"/><line x1="447.5" y1="20" x2="447.5" y2="24" stroke="#8a8a8a" stroke-width="1"/><line x1="457.5" y1="20" x2="457.5" y2="24" stroke="#8a8a8a" stroke-width="1"/><line x1="468.5" y1="20" x2="468.5" y2="24" stroke="#8a8a8a" stroke-width="1"/><line x1="478.5" y1="16" x2="478.5" y2="24" stroke="#8a8a8a" stroke-width="1.2"/><line x1="488.5" y1="20" x2="488.5" y2="24" stroke="#8a8a8a" stroke-width="1"/><line x1="499.5" y1="20" x2="499.5" y2="24" stroke="#8a8a8a" stroke-width="1"/><line x1="509.5" y1="20" x2="509.5" y2="24" stroke="#8a8a8a" stroke-width="1"/><line x1="520.5" y1="20" x2="520.5" y2="24" stroke="#8a8a8a" stroke-width="1"/><line x1="530.5" y1="16" x2="530.5" y2="24" stroke="#8a8a8a" stroke-width="1.2"/><line x1="541.5" y1="20" x2="541.5" y2="24" stroke="#8a8a8a" stroke-width="1"/><line x1="551.5" y1="20" x2="551.5" y2="24" stroke="#8a8a8a" stroke-width="1"/><line x1="562.5" y1="20" x2="562.5" y2="24" stroke="#8a8a8a" stroke-width="1"/><line x1="572.5" y1="20" x2="572.5" y2="24" stroke="#8a8a8a" stroke-width="1"/><line x1="583.5" y1="16" x2="583.5" y2="24" stroke="#8a8a8a" stroke-width="1.2"/><line x1="593.5" y1="20" x2="593.5" y2="24" stroke="#8a8a8a" stroke-width="1"/><line x1="603.5" y1="20" x2="603.5" y2="24" stroke="#8a8a8a" stroke-width="1"/><line x1="614.5" y1="20" x2="614.5" y2="24" stroke="#8a8a8a" stroke-width="1"/><line x1="624.5" y1="20" x2="624.5" y2="24" stroke="#8a8a8a" stroke-width="1"/><line x1="635.5" y1="16" x2="635.5" y2="24" stroke="#8a8a8a" stroke-width="1.2"/><line x1="645.5" y1="20" x2="645.5" y2="24" stroke="#8a8a8a" stroke-width="1"/><line x1="656.5" y1="20" x2="656.5" y2="24" stroke="#8a8a8a" stroke-width="1"/><line x1="666.5" y1="20" x2="666.5" y2="24" stroke="#8a8a8a" stroke-width="1"/><line x1="677.5" y1="20" x2="677.5" y2="24" stroke="#8a8a8a" stroke-width="1"/><line x1="687.5" y1="16" x2="687.5" y2="24" stroke="#8a8a8a" stroke-width="1.2"/><line x1="698.5" y1="20" x2="698.5" y2="24" stroke="#8a8a8a" stroke-width="1"/><line x1="708.5" y1="20" x2="708.5" y2="24" stroke="#8a8a8a" stroke-width="1"/><line x1="718.5" y1="20" x2="718.5" y2="24" stroke="#8a8a8a" stroke-width="1"/><line x1="729.5" y1="20" x2="729.5" y2="24" stroke="#8a8a8a" stroke-width="1"/><line x1="739.5" y1="16" x2="739.5" y2="24" stroke="#8a8a8a" stroke-width="1.2"/><line x1="750.5" y1="20" x2="750.5" y2="24" stroke="#8a8a8a" stroke-width="1"/><line x1="760.5" y1="20" x2="760.5" y2="24" stroke="#8a8a8a" stroke-width="1"/><line x1="771.5" y1="20" x2="771.5" y2="24" stroke="#8a8a8a" stroke-width="1"/><line x1="781.5" y1="20" x2="781.5" y2="24" stroke="#8a8a8a" stroke-width="1"/><line x1="792.5" y1="16" x2="792.5" y2="24" stroke="#8a8a8a" stroke-width="1.2"/><line x1="802.5" y1="20" x2="802.5" y2="24" stroke="#8a8a8a" stroke-width="1"/><line x1="813.5" y1="20" x2="813.5" y2="24" stroke="#8a8a8a" stroke-width="1"/><line x1="823.5" y1="20" x2="823.5" y2="24" stroke="#8a8a8a" stroke-width="1"/><line x1="833.5" y1="20" x2="833.5" y2="24" stroke="#8a8a8a" stroke-width="1"/><line x1="844.5" y1="16" x2="844.5" y2="24" stroke="#8a8a8a" stroke-width="1.2"/><line x1="854.5" y1="20" x2="854.5" y2="24" stroke="#8a8a8a" stroke-width="1"/><line x1="865.5" y1="20" x2="865.5" y2="24" stroke="#8a8a8a" stroke-width="1"/><line x1="875.5" y1="20" x2="875.5" y2="24" stroke="#8a8a8a" stroke-width="1"/></svg>
<div class="t" style="left:1029px;top:671.0px;height:16px;line-height:16px;font-size:12px;color:#e0e0e0;">0</div>
<div class="t" style="left:1065.96px;width:40px;text-align:center;top:671.0px;height:16px;line-height:16px;font-size:12px;color:#e0e0e0;">15</div>
<div class="t" style="left:1118.22px;width:40px;text-align:center;top:671.0px;height:16px;line-height:16px;font-size:12px;color:#e0e0e0;">30</div>
<div class="t" style="left:1170.48px;width:40px;text-align:center;top:671.0px;height:16px;line-height:16px;font-size:12px;color:#e0e0e0;">45</div>
<div class="t" style="left:1222.74px;width:40px;text-align:center;top:671.0px;height:16px;line-height:16px;font-size:12px;color:#e0e0e0;">60</div>
<div class="t" style="left:1275.0px;width:40px;text-align:center;top:671.0px;height:16px;line-height:16px;font-size:12px;color:#e0e0e0;">75</div>
<div class="t" style="left:1327.26px;width:40px;text-align:center;top:671.0px;height:16px;line-height:16px;font-size:12px;color:#e0e0e0;">90</div>
<div class="t" style="left:1379.52px;width:40px;text-align:center;top:671.0px;height:16px;line-height:16px;font-size:12px;color:#e0e0e0;">105</div>
<div class="t" style="left:1431.78px;width:40px;text-align:center;top:671.0px;height:16px;line-height:16px;font-size:12px;color:#e0e0e0;">120</div>
<div class="t" style="left:1484.04px;width:40px;text-align:center;top:671.0px;height:16px;line-height:16px;font-size:12px;color:#e0e0e0;">135</div>
<div class="t" style="left:1536.3000000000002px;width:40px;text-align:center;top:671.0px;height:16px;line-height:16px;font-size:12px;color:#e0e0e0;">150</div>
<div class="t" style="left:1588.56px;width:40px;text-align:center;top:671.0px;height:16px;line-height:16px;font-size:12px;color:#e0e0e0;">165</div>
<div class="t" style="left:1640.8200000000002px;width:40px;text-align:center;top:671.0px;height:16px;line-height:16px;font-size:12px;color:#e0e0e0;">180</div>
<div class="t" style="left:1693.08px;width:40px;text-align:center;top:671.0px;height:16px;line-height:16px;font-size:12px;color:#e0e0e0;">195</div>
<div class="t" style="left:1745.3400000000001px;width:40px;text-align:center;top:671.0px;height:16px;line-height:16px;font-size:12px;color:#e0e0e0;">210</div>
<div class="t" style="left:1797.6px;width:40px;text-align:center;top:671.0px;height:16px;line-height:16px;font-size:12px;color:#e0e0e0;">225</div>
<div class="t" style="left:1849.8600000000001px;width:40px;text-align:center;top:671.0px;height:16px;line-height:16px;font-size:12px;color:#e0e0e0;">240</div>
<div style="left:1034px;top:694px;width:871px;height:16px;background:#444444;"></div>
<div style="left:1029px;top:693px;width:6px;height:18px;background:#6fc7a8;border-radius:2px;"></div>
<div style="left:1905px;top:693px;width:5px;height:18px;background:#6fc7a8;border-radius:2px;"></div>
<div style="left:1034px;top:722px;width:871px;height:18px;background:#c5c5c5;border-radius:3px;"></div>
<div class="t" style="left:1042px;top:723.5px;height:16px;line-height:16px;font-size:12px;color:#1e1e1e;">3</div>
<div style="left:1034px;top:744px;width:871px;height:18px;background:repeating-linear-gradient(135deg,#eefd9e 0px,#eefd9e 1.4px,#cbef80 1.4px,#cbef80 12px,#e6fb96 12px,#e6fb96 13.4px,#c6e87c 13.4px,#b5d76f 17px,#b5d76f 25px);border-radius:3px;background-position:4px 0;"></div>
<div class="t" style="left:1042px;top:745.5px;height:16px;line-height:16px;font-size:12px;color:#1e1e1e;">TransitionNoise</div>
<div style="left:1034px;top:788px;width:871px;height:18px;background:repeating-linear-gradient(135deg,#eefd9e 0px,#eefd9e 1.4px,#cbef80 1.4px,#cbef80 12px,#e6fb96 12px,#e6fb96 13.4px,#c6e87c 13.4px,#b5d76f 17px,#b5d76f 25px);border-radius:3px;background-position:4px 0;"></div>
<div class="t" style="left:1042px;top:789.5px;height:16px;line-height:16px;font-size:12px;color:#1e1e1e;">Frame [Start Angle]</div>
<div style="left:1034px;top:810px;width:871px;height:18px;background:#fee57e;border-radius:3px;"></div>
<div class="t" style="left:1042px;top:811.5px;height:16px;line-height:16px;font-size:12px;color:#1e1e1e;">RingDuplicator</div>
<div style="left:1034px;top:832px;width:871px;height:18px;background:#fee57e;border-radius:3px;"></div>
<div class="t" style="left:1042px;top:833.5px;height:16px;line-height:16px;font-size:12px;color:#1e1e1e;">Ellipse Shape 2</div>
<div style="left:1034px;top:854px;width:871px;height:18px;background:repeating-linear-gradient(135deg,#eefd9e 0px,#eefd9e 1.4px,#cbef80 1.4px,#cbef80 12px,#e6fb96 12px,#e6fb96 13.4px,#c6e87c 13.4px,#b5d76f 17px,#b5d76f 25px);border-radius:3px;background-position:4px 0;"></div>
<div class="t" style="left:1042px;top:855.5px;height:16px;line-height:16px;font-size:12px;color:#1e1e1e;">2to3</div>
<div style="left:1034px;top:876px;width:871px;height:18px;background:#c5c5c5;border-radius:3px;"></div>
<div class="t" style="left:1042px;top:877.5px;height:16px;line-height:16px;font-size:12px;color:#1e1e1e;">2</div>
<div style="left:1034px;top:898px;width:871px;height:18px;background:repeating-linear-gradient(135deg,#eefd9e 0px,#eefd9e 1.4px,#cbef80 1.4px,#cbef80 12px,#e6fb96 12px,#e6fb96 13.4px,#c6e87c 13.4px,#b5d76f 17px,#b5d76f 25px);border-radius:3px;background-position:4px 0;"></div>
<div class="t" style="left:1042px;top:899.5px;height:16px;line-height:16px;font-size:12px;color:#1e1e1e;">1to2 &amp; 4to1</div>
<div style="left:1034px;top:920px;width:871px;height:18px;background:#c5c5c5;border-radius:3px;"></div>
<div class="t" style="left:1042px;top:921.5px;height:16px;line-height:16px;font-size:12px;color:#1e1e1e;">1</div>
<div style="left:1034px;top:942px;width:871px;height:18px;background:#fee57e;border-radius:3px;"></div>
<div class="t" style="left:1042px;top:943.5px;height:16px;line-height:16px;font-size:12px;color:#1e1e1e;">Background Shape</div>
<div style="left:1272px;top:773px;width:131px;height:2px;background:#c7ee7f;"></div>
<svg style="left:1265px;top:768px;" width="12" height="12" viewBox="0 0 12 12"><path d="M6 1 L11 6 L6 11 L1 6 Z" fill="#cfcfcf"/></svg>
<svg style="left:1397px;top:768px;" width="12" height="12" viewBox="0 0 12 12"><path d="M6 1 L11 6 L6 11 L1 6 Z" fill="#cfcfcf"/></svg>
<div style="left:1164px;top:860.5px;width:4px;height:4px;border-radius:50%;background:#6e8a4a;"></div>
<div style="left:1254.5px;top:860.5px;width:4px;height:4px;border-radius:50%;background:#6e8a4a;"></div>
<div style="left:1112px;top:904.5px;width:4px;height:4px;border-radius:50%;background:#6e8a4a;"></div>
<div style="left:1401.3px;top:904.5px;width:4px;height:4px;border-radius:50%;background:#6e8a4a;"></div>
<div style="left:1474px;top:904.5px;width:4px;height:4px;border-radius:50%;background:#6e8a4a;"></div>
<div style="left:1145px;top:692px;width:1px;height:271px;background:#6fc7a8;"></div>
<svg style="left:1137px;top:684px;" width="17" height="10" viewBox="0 0 17 10"><path d="M0.5 0.5 H16.5 L8.5 9 Z" fill="#6fc7a8"/></svg>
<div style="left:1905px;top:712px;width:9px;height:251px;background:#1f1f1f;"></div>
<div style="left:1026px;top:963px;width:888px;height:13px;background:#2d2d2d;"></div>
<div style="left:1027px;top:964px;width:885px;height:10px;background:#4e4e4e;border-radius:5px;"></div>
<div style="left:494px;top:976px;width:524px;height:22px;background:#444444;"></div>
<div style="left:497px;top:978px;width:20px;height:18px;background:#2c2c2c;border-radius:4px;border:1px solid #1c1c1c;border-top-color:#474747;"></div>
<svg style="left:500px;top:982px;" width="15" height="10" viewBox="0 0 15 10"><path d="M4 0 H15 V10 H4 L0 5 Z" fill="#ddd"/><circle cx="5" cy="5" r="1.6" fill="#2c2c2c"/></svg>
<div style="left:810px;top:978px;width:20px;height:18px;background:#2c2c2c;border-radius:4px;border:1px solid #1c1c1c;border-top-color:#474747;"></div>
<svg style="left:814px;top:981px;" width="12" height="12" viewBox="0 0 12 12"><rect x="0.5" y="0.5" width="11" height="11" fill="none" stroke="#ccc"/><rect x="4" y="4" width="4" height="4" fill="#ddd"/></svg>
<div style="left:834px;top:977px;width:181px;height:20px;background:#4c4c4c;border-radius:3px;"></div>
<div style="left:835px;top:978px;width:85px;height:18px;background:#2a2a2a;border-radius:3px;"></div>
<svg style="left:840px;top:981px;" width="12" height="12" viewBox="0 0 12 12"><rect x="0" y="0.5" width="8" height="2" fill="#2ecc71"/><rect x="3" y="5" width="9" height="2" fill="#2ecc71"/><rect x="1" y="9.5" width="9" height="2" fill="#2ecc71"/></svg>
<div class="t" style="left:856px;top:980.0px;height:16px;line-height:16px;font-size:12px;color:#eaeaea;">Time Editor</div>
<svg style="left:928px;top:980px;" width="13" height="13" viewBox="0 0 13 13"><path d="M1 0 V12 H13" stroke="#ccc" fill="none"/><path d="M2 11 L12 3" stroke="#ccc"/><path d="M3 7 H7" stroke="#888"/></svg>
<div class="t" style="left:945px;top:980.0px;height:16px;line-height:16px;font-size:12px;color:#e6e6e6;">Graph Editor</div>
<div style="left:1018px;top:976px;width:8px;height:22px;background:#1f1f1f;"></div>
<div style="left:1026px;top:976px;width:888px;height:22px;background:#444444;"></div>
<div style="left:1030px;top:978px;width:17px;height:17px;background:#2c2c2c;border-radius:3px;border:1px solid #1c1c1c;border-top-color:#474747;"></div>
<svg style="left:1032px;top:981px;" width="13" height="12" viewBox="0 0 13 12"><rect x="0" y="0" width="13" height="1.3" fill="#ddd"/><rect x="2" y="4" width="11" height="1.3" fill="#ddd"/><rect x="0" y="8" width="3" height="1.3" fill="#ddd"/><rect x="5" y="8" width="5" height="1.3" fill="#ddd"/></svg>
<div style="left:1050px;top:979px;width:150px;height:16px;background:#2a2a2a;border-radius:2px;"></div>
<div class="t" style="left:1052px;top:980.0px;height:16px;line-height:16px;font-size:12px;color:#eaeaea;">Default Keyframe Layer</div>
<div style="left:1206px;top:979px;width:70px;height:16px;background:#2a2a2a;border-radius:2px;"></div>
<div class="t" style="left:1211px;top:980.5px;height:15px;line-height:15px;font-size:11px;color:#555;">F</div>
<div class="t" style="left:1224px;top:980.0px;height:16px;line-height:16px;font-size:12px;color:#ccc;">-</div>
<div class="t" style="left:1283px;top:980.0px;height:16px;line-height:16px;font-size:12px;color:#e6e6e6;">Align:</div>
<div style="left:1318px;top:979px;width:53px;height:17px;background:#2a2a2a;border-radius:3px;border:1px solid #1c1c1c;border-top-color:#474747;"></div>
<div style="left:1335px;top:979px;width:1px;height:17px;background:#222;"></div>
<div style="left:1353px;top:979px;width:1px;height:17px;background:#222;"></div>
<svg style="left:1322px;top:981px;" width="12" height="12" viewBox="0 0 12 12"><rect x="0" y="0" width="1.2" height="12" fill="#ddd"/><rect x="2.5" y="2" width="3" height="1.6" fill="#ddd"/><rect x="2.5" y="8" width="8" height="1.6" fill="#ddd"/></svg>
<svg style="left:1339px;top:981px;" width="12" height="12" viewBox="0 0 12 12"><rect x="5.4" y="0" width="1.2" height="12" fill="#ddd"/><rect x="1" y="2" width="3" height="1.6" fill="#ddd"/><rect x="1" y="8" width="10" height="1.6" fill="#ddd"/></svg>
<svg style="left:1356px;top:981px;" width="12" height="12" viewBox="0 0 12 12"><rect x="10.8" y="0" width="1.2" height="12" fill="#ddd"/><rect x="6" y="2" width="3" height="1.6" fill="#ddd"/><rect x="1" y="8" width="8" height="1.6" fill="#ddd"/></svg>
<div style="left:1376px;top:979px;width:17px;height:17px;background:#2a2a2a;border-radius:3px;border:1px solid #1c1c1c;border-top-color:#474747;"></div>
<svg style="left:1379px;top:982px;" width="11" height="11" viewBox="0 0 11 11"><rect x="0.5" y="0.5" width="10" height="10" fill="none" stroke="#ddd" stroke-dasharray="2 1.5"/><rect x="4" y="4" width="3" height="3" fill="#ddd"/></svg>
<div style="left:1397px;top:979px;width:31px;height:17px;background:#2a2a2a;border-radius:3px;border:1px solid #1c1c1c;border-top-color:#474747;"></div>
<div style="left:1413px;top:979px;width:1px;height:17px;background:#222;"></div>
<svg style="left:1400px;top:981px;" width="13" height="13" viewBox="0 0 13 13"><path d="M2 8 A5 5 0 1 1 11 8" stroke="#ddd" stroke-width="2.2" fill="none"/></svg>
<svg style="left:1416px;top:984px;" width="7" height="8" viewBox="0 0 7 8"><path d="M1 0.5 L6 4 L1 7.5 Z" fill="none" stroke="#888"/></svg>
<div style="left:1432px;top:979px;width:31px;height:17px;background:#2a2a2a;border-radius:3px;border:1px solid #1c1c1c;border-top-color:#474747;"></div>
<div style="left:1448px;top:979px;width:1px;height:17px;background:#222;"></div>
<svg style="left:1434px;top:981px;" width="14" height="13" viewBox="0 0 14 13"><path d="M7 0 V13 M0 6.5 H4 M10 6.5 H14 M4.5 3 V10 M9.5 3 V10" stroke="#ddd" stroke-width="1"/></svg>
<svg style="left:1451px;top:984px;" width="7" height="8" viewBox="0 0 7 8"><path d="M1 0.5 L6 4 L1 7.5 Z" fill="none" stroke="#888"/></svg>
<svg style="left:1743px;top:981px;" width="14" height="14" viewBox="0 0 14 14"><circle cx="6" cy="6" r="5" stroke="#ccc" stroke-width="1.1" fill="none"/><path d="M3.5 6 H8.5" stroke="#ccc" stroke-width="1.1"/><path d="M10 10 L13 13" stroke="#ccc" stroke-width="1.5"/></svg>
<div style="left:1768px;top:985px;width:114px;height:4px;background:#353535;border-radius:2px;"></div>
<div style="left:1762px;top:982px;width:10px;height:10px;border-radius:50%;background:#7ecfb0;"></div>
<div style="left:1765.2px;top:985.2px;width:3.6px;height:3.6px;border-radius:50%;background:#4f9f84;"></div>
<svg style="left:1887px;top:981px;" width="14" height="14" viewBox="0 0 14 14"><circle cx="6" cy="6" r="5" stroke="#ccc" stroke-width="1.1" fill="none"/><path d="M3.5 6 H8.5 M6 3.5 V8.5" stroke="#ccc" stroke-width="1.1"/><path d="M10 10 L13 13" stroke="#ccc" stroke-width="1.5"/></svg>
<div style="left:494px;top:998px;width:1420px;height:6px;background:#131313;"></div>
<div style="left:494px;top:1004px;width:1420px;height:22px;background:#3a3a3a;"></div>
<div style="left:498px;top:1009px;width:2px;height:2px;background:#777;"></div>
<div style="left:498px;top:1014px;width:2px;height:2px;background:#777;"></div>
<div style="left:498px;top:1019px;width:2px;height:2px;background:#777;"></div>
<div style="left:507px;top:1006px;width:17px;height:18px;background:#262626;border-radius:4px;border:1px solid #1a1a1a;border-top-color:#4a4a4a;"></div>
<svg style="left:509px;top:1008px;" width="14" height="13" viewBox="0 0 14 13"><path d="M0.5 0.5 H13.5 V10 H11.5 L12 12.5 L9 10 H0.5 Z" fill="#e0e0e0"/><rect x="2.5" y="2.5" width="1.3" height="1.2" fill="#333"/><rect x="5" y="2.5" width="6.5" height="1.2" fill="#333"/><rect x="2.5" y="5" width="1.3" height="1.2" fill="#333"/><rect x="5" y="5" width="6.5" height="1.2" fill="#333"/><rect x="2.5" y="7.5" width="1.3" height="1.2" fill="#333"/><rect x="5" y="7.5" width="6.5" height="1.2" fill="#333"/></svg>
<div style="left:528px;top:1008px;width:18px;height:13px;background:#2ecc71;border-radius:2px;"></div>
<div class="t" style="left:527.0px;width:20px;text-align:center;top:1007.5px;height:15px;line-height:15px;font-size:11px;color:#111;">9+</div>
<div style="left:554px;top:1012px;width:6px;height:6px;border-radius:50%;background:#2ecc71;"></div>
<div class="t" style="left:565px;top:1006.5px;height:16px;line-height:16px;font-size:12px;color:#eee;"><span style="color:#e6e6e6">Connected: </span><span style="color:#d27ee6">TransitionOffset</span><span style="color:#e6e6e6"> to </span><span style="color:#d9c27a">3to4</span><span style="color:#e6e6e6">.</span></div>
<div class="t" style="left:1171px;width:300px;text-align:right;top:1006.5px;height:16px;line-height:16px;font-size:11.5px;color:#e0e0e0;font-style:italic;letter-spacing:-0.5px;">Click to see next message</div>
<div style="left:1477px;top:1006px;width:80px;height:18px;background:#c9b36a;border-radius:2px;"></div>
<div class="t" style="left:1483px;top:1007.0px;height:16px;line-height:16px;font-size:11.6px;color:#1e1e1e;">Feedback</div>
<svg style="left:1538px;top:1008px;" width="14" height="14" viewBox="0 0 14 14"><rect x="2" y="1" width="9" height="12" fill="#eee"/><path d="M5 11 L12 4" stroke="#e05a3a" stroke-width="2.5"/></svg>
<div style="left:1560px;top:1006px;width:108px;height:18px;background:#2dcc72;border-radius:2px;"></div>
<div class="t" style="left:1566px;top:1007.0px;height:16px;line-height:16px;font-size:11.6px;color:#1e1e1e;">Upgrade to Pro</div>
<svg style="left:1649px;top:1009px;" width="14" height="12" viewBox="0 0 14 12"><path d="M1 11 L1 5 Q3 2 5 5 L6 11 Z M8 11 L9 5 Q11 2 13 5 L13 11 Z" fill="#f0b82a"/></svg>
<div style="left:1672px;top:1006px;width:129px;height:18px;background:#b993f2;border-radius:2px;"></div>
<div class="t" style="left:1678px;top:1007.0px;height:16px;line-height:16px;font-size:11.6px;color:#1e1e1e;">New Beta Available</div>
<svg style="left:1782px;top:1008px;" width="15" height="14" viewBox="0 0 15 14"><circle cx="7.5" cy="8" r="5.5" fill="#f5c23e"/><path d="M2 5 L6 1 L9 4" stroke="#e0508a" stroke-width="2" fill="none"/><circle cx="11" cy="3" r="1.5" fill="#47a0f0"/></svg>
<div style="left:1805px;top:1006px;width:106px;height:18px;background:#3db4f2;border-radius:2px;"></div>
<div class="t" style="left:1811px;top:1007.0px;height:16px;line-height:16px;font-size:11.6px;color:#1e1e1e;">Tips and Tricks</div>
<svg style="left:1889px;top:1008px;" width="15" height="14" viewBox="0 0 15 14"><path d="M13 1 Q12 7 6 11 L3 8 Q7 2 13 1 Z" fill="#f0f0f0"/><circle cx="9" cy="5" r="1.3" fill="#3a7ae0"/><path d="M3 8 L1 12 L6 11 Z" fill="#e0402a"/></svg>
<div style="left:0px;top:1026px;width:1920px;height:3px;background:#1f1f1f;"></div>
<div style="left:1914px;top:49px;width:6px;height:980px;background:#1f1f1f;"></div>
<div style="left:0px;top:85px;width:6px;height:941px;background:#1e1e1e;"></div>
</body></html>
